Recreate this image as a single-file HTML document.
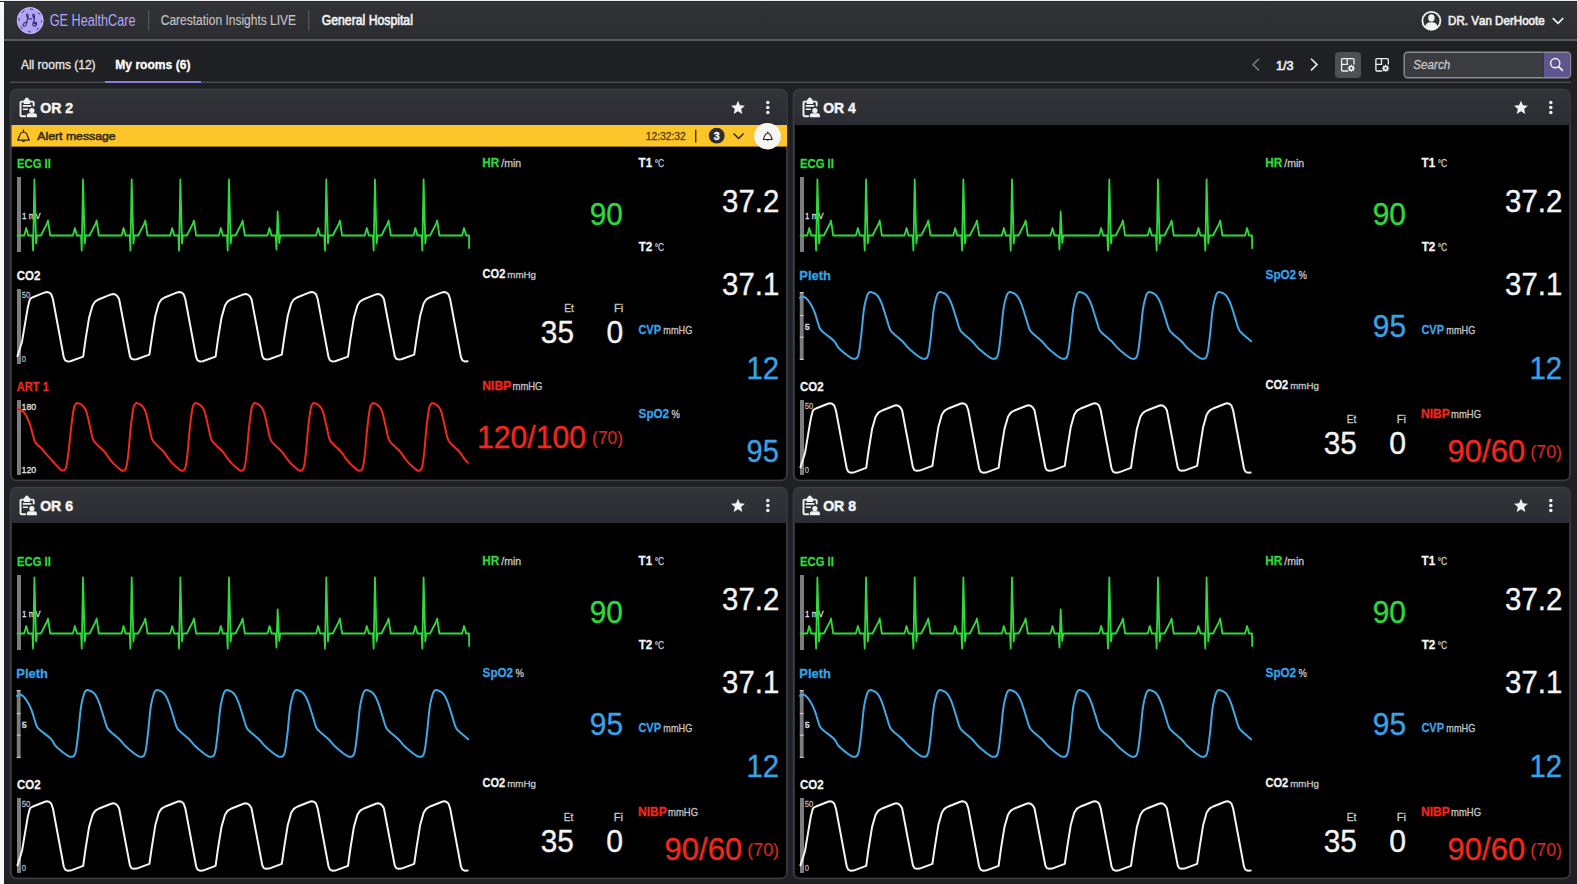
<!DOCTYPE html>
<html><head><meta charset="utf-8"><title>Carestation Insights LIVE</title>
<style>
html,body{margin:0;padding:0;background:#1f2023;overflow:hidden;}
svg{display:block;font-family:"Liberation Sans", sans-serif;font-kerning:none;}
text{font-family:"Liberation Sans", sans-serif;}
</style></head>
<body>
<svg width="1577" height="884" viewBox="0 0 1577 884">
<defs><linearGradient id="ph" x1="0" y1="0" x2="0" y2="1"><stop offset="0" stop-color="#333438"/><stop offset="0.55" stop-color="#2f3035"/><stop offset="1" stop-color="#2a2c33"/></linearGradient><linearGradient id="hh" x1="0" y1="0" x2="0" y2="1"><stop offset="0" stop-color="#333438"/><stop offset="1" stop-color="#2b2c30"/></linearGradient></defs>
<rect x="0" y="0" width="1577" height="884" fill="#1f2023"/>
<rect x="0" y="0" width="1577" height="40" fill="url(#hh)" />
<rect x="0" y="39" width="1577" height="2" fill="#5a5b5e" />
<rect x="0" y="0" width="4" height="884" fill="#f7f7f7" />
<rect x="0" y="1" width="1577" height="1" fill="#27282c" />
<rect x="0" y="0" width="1577" height="1" fill="#eeeef1" />
<circle cx="30.2" cy="20.5" r="13.3" fill="#b4a2f5"/>
<circle cx="30.2" cy="20.5" r="12.9" fill="none" stroke="#d6ccfb" stroke-width="0.7"/>
<circle cx="30.2" cy="20.5" r="11.4" fill="none" stroke="#2b2263" stroke-width="0.9" stroke-dasharray="3.2 5.8" stroke-dashoffset="1"/>
<path d="M23.2,24.6 Q23.0,26.6 24.6,26.3 Q26.4,25.6 26.9,22.4 L28.0,16.6 Q28.4,14.2 27.3,14.3 Q26.2,14.6 26.6,16.0 Q27.2,17.6 29.0,18.6 Q30.3,19.3 31.6,18.9 M26.9,22.4 Q25.4,22.0 24.2,23.2 Q23.3,24.0 23.2,24.6 M33.8,22.2 L34.4,16.6 Q34.6,14.2 33.5,14.3 Q32.4,14.6 32.8,16.0 Q33.3,17.4 34.6,18.2 M33.8,22.2 Q32.2,23.2 32.8,25.0 Q33.6,26.6 35.4,26.0 Q37.2,25.2 36.6,23.2 Q36.0,21.8 34.6,22.4 Q33.8,23.2 34.6,24.0 Q35.4,24.4 35.6,23.5" fill="none" stroke="#2b2263" stroke-width="1.05" stroke-linecap="round" stroke-linejoin="round"/>
<text x="49.76" y="26.10" font-size="15.80" fill="#b7a6f6" textLength="85.80" lengthAdjust="spacingAndGlyphs">GE HealthCare</text>
<rect x="148" y="10.5" width="1.3" height="20" fill="#56575b" />
<text x="160.77" y="25.30" font-size="14.00" fill="#c3c3c6" stroke="#c3c3c6" stroke-width="0.15" textLength="135.27" lengthAdjust="spacingAndGlyphs">Carestation Insights LIVE</text>
<rect x="308" y="10.5" width="1.3" height="20" fill="#56575b" />
<text x="321.68" y="25.30" font-size="14.00" fill="#f4f4f4" stroke="#f4f4f4" stroke-width="0.6" textLength="91.24" lengthAdjust="spacingAndGlyphs">General Hospital</text>
<circle cx="1431.4" cy="20.8" r="9.0" fill="none" stroke="#f0f0f0" stroke-width="1.8"/>
<ellipse cx="1431.4" cy="17.9" rx="3.2" ry="3.6" fill="#f2f2f2"/>
<path d="M1424.9,27.4 Q1425.4,22.2 1431.4,22.2 Q1437.4,22.2 1437.9,27.4 Q1434.8,29.8 1431.4,29.8 Q1428,29.8 1424.9,27.4 Z" fill="#f0f0f0"/>
<text x="1448.05" y="24.80" font-size="12.40" fill="#f2f2f2" stroke="#f2f2f2" stroke-width="0.6" textLength="96.67" lengthAdjust="spacingAndGlyphs">DR. Van DerHoote</text>
<path d="M1552.8,18.2 L1558,23.4 L1563.2,18.2" fill="none" stroke="#f0f0f0" stroke-width="1.7"/>
<text x="20.92" y="69.10" font-size="13.20" fill="#ececec" stroke="#ececec" stroke-width="0.28" textLength="74.69" lengthAdjust="spacingAndGlyphs">All rooms (12)</text>
<text x="115.24" y="69.10" font-size="13.20" fill="#ffffff" stroke="#ffffff" stroke-width="0.3" font-weight="bold" textLength="75.21" lengthAdjust="spacingAndGlyphs">My rooms (6)</text>
<rect x="10" y="81.6" width="1561" height="1.4" fill="#4b4c50" />
<rect x="105" y="81" width="96" height="2" fill="#8b7dd8" />
<path d="M1259,58.8 L1253,64.6 L1259,70.4" fill="none" stroke="#7a7a7c" stroke-width="1.5"/>
<text x="1276.03" y="69.60" font-size="13.00" fill="#f4f4f4" stroke="#f4f4f4" stroke-width="0.6" textLength="17.62" lengthAdjust="spacingAndGlyphs">1/3</text>
<path d="M1311,58.8 L1317,64.6 L1311,70.4" fill="none" stroke="#f0f0f0" stroke-width="1.5"/>
<rect x="1335" y="52" width="26" height="26" fill="#4f5053" rx="4" />
<g transform="translate(1341,58)" fill="none" stroke="#f0f0f0" stroke-width="1.3"><path d="M7,13 L1.5,13 Q0.6,13 0.6,12 L0.6,1.6 Q0.6,0.6 1.6,0.6 L12,0.6 Q13,0.6 13,1.6 L13,6.5"/><path d="M6.2,0.6 L6.2,6.3 L0.6,6.3"/></g>
<path d="M1355.30,68.30 L1353.70,69.29 L1354.13,71.13 L1352.29,70.70 L1351.30,72.30 L1350.31,70.70 L1348.47,71.13 L1348.90,69.29 L1347.30,68.30 L1348.90,67.31 L1348.47,65.47 L1350.31,65.90 L1351.30,64.30 L1352.29,65.90 L1354.13,65.47 L1353.70,67.31 Z" fill="#f0f0f0"/>
<circle cx="1351.3" cy="68.3" r="1.1" fill="#3a3a3a"/>
<g transform="translate(1375.3,58)" fill="none" stroke="#f0f0f0" stroke-width="1.3"><path d="M7,13 L1.5,13 Q0.6,13 0.6,12 L0.6,1.6 Q0.6,0.6 1.6,0.6 L12,0.6 Q13,0.6 13,1.6 L13,6.5"/><path d="M6.2,0.6 L6.2,6.3 L0.6,6.3"/></g>
<path d="M1389.60,68.30 L1388.00,69.29 L1388.43,71.13 L1386.59,70.70 L1385.60,72.30 L1384.61,70.70 L1382.77,71.13 L1383.20,69.29 L1381.60,68.30 L1383.20,67.31 L1382.77,65.47 L1384.61,65.90 L1385.60,64.30 L1386.59,65.90 L1388.43,65.47 L1388.00,67.31 Z" fill="#f0f0f0"/>
<circle cx="1385.6" cy="68.3" r="1.1" fill="#3a3a3a"/>
<rect x="1404.2" y="52.2" width="166.3" height="25.6" rx="3.5" fill="#3b3c40" stroke="#8e8e92" stroke-width="1.4"/>
<path d="M1543.5,52.9 L1567,52.9 Q1569.8,52.9 1569.8,55.7 L1569.8,74.3 Q1569.8,77.1 1567,77.1 L1543.5,77.1 Z" fill="#5f558f"/>
<line x1="1543.3" y1="52.5" x2="1543.3" y2="77.5" stroke="#2f3034" stroke-width="0.8"/>
<circle cx="1555.2" cy="63.2" r="4.6" fill="none" stroke="#f2f2f2" stroke-width="1.5"/>
<path d="M1558.6,66.6 L1562.4,70.4" stroke="#f2f2f2" stroke-width="1.7" stroke-linecap="round"/>
<text x="1413.31" y="68.70" font-size="12.60" fill="#c8c8ca" stroke="#c8c8ca" stroke-width="0.28" font-style="italic" textLength="36.88" lengthAdjust="spacingAndGlyphs">Search</text>
<rect x="10.5" y="89.5" width="776.5" height="391" rx="6" fill="#2e2f33" stroke="#3c3d41" stroke-width="1.5"/>
<path d="M11.0,125.5 L11.0,95.5 Q11.0,90.0 16.5,90.0 L781.0,90.0 Q786.5,90.0 786.5,95.5 L786.5,125.5 Z" fill="url(#ph)"/>
<path d="M12,125 L786,125 L786,474.5 Q786,479.5 781,479.5 L17,479.5 Q12,479.5 12,474.5 Z" fill="#000"/>
<g transform="translate(16,94)" fill="none" stroke="#f2f2f2" stroke-width="1.9" stroke-linecap="round"><path d="M9.2,22.3 L5.6,22.3 Q4.5,22.3 4.5,21.2 L4.5,8.7 Q4.5,7.6 5.6,7.6 L7.6,7.6"/><path d="M14.0,7.6 L16.6,7.6 Q17.7,7.6 17.7,8.7 L17.7,11.6"/></g>
<g transform="translate(16,94)" fill="#f2f2f2"><path d="M7.7,9.9 L7.7,6.4 Q7.7,5.4 8.7,5.4 L9.0,5.4 A1.85,1.85 0 0 1 12.7,5.4 L13.0,5.4 Q14.0,5.4 14.0,6.4 L14.0,9.9 Z"/><rect x="6.7" y="11.1" width="8.7" height="1.6" rx="0.5"/><rect x="6.7" y="14.4" width="5.3" height="1.6" rx="0.5"/><circle cx="15.9" cy="16.5" r="2.6"/><path d="M10.9,23.3 L10.9,21.2 Q10.9,19.2 13.0,19.2 L18.8,19.2 Q20.9,19.2 20.9,21.2 L20.9,23.3 Z"/></g>
<text x="40.17" y="112.50" font-size="15.30" fill="#f4f4f4" stroke="#f4f4f4" stroke-width="0.5" font-weight="bold" textLength="32.94" lengthAdjust="spacingAndGlyphs">OR 2</text>
<path d="M738.00,100.70 L739.93,105.34 L744.94,105.74 L741.12,109.02 L742.29,113.91 L738.00,111.28 L733.71,113.91 L734.88,109.02 L731.06,105.74 L736.07,105.34 Z" fill="#f2f2f2"/>
<circle cx="767.8" cy="102.5" r="1.75" fill="#f2f2f2"/>
<circle cx="767.8" cy="107.5" r="1.75" fill="#f2f2f2"/>
<circle cx="767.8" cy="112.5" r="1.75" fill="#f2f2f2"/>
<text x="17.00" y="168.40" font-size="13.60" fill="#2fd93c" stroke="#2fd93c" stroke-width="0.3" font-weight="bold" textLength="33.81" lengthAdjust="spacingAndGlyphs">ECG II</text>
<rect x="17" y="177" width="4" height="75" fill="#7d7d7d" />
<text x="22.04" y="218.70" font-size="9.20" fill="#e0e0e0" stroke="#e0e0e0" stroke-width="0.28" textLength="18.47" lengthAdjust="spacingAndGlyphs">1 mV</text>
<path d="M17.50,235.50 L24.20,235.50 L25.20,232.00 L26.20,228.00 L27.20,231.50 L28.20,235.50 L32.40,235.50 L33.10,250.50 L34.40,179.50 L36.10,243.50 L37.00,235.50 L40.90,235.50 L43.90,229.50 L46.60,224.50 L48.00,220.50 L50.20,235.50 L72.85,235.50 L73.85,232.00 L74.85,228.00 L75.85,231.50 L76.85,235.50 L81.05,235.50 L81.75,250.50 L83.05,179.50 L84.75,243.50 L85.65,235.50 L89.55,235.50 L92.55,229.50 L95.25,224.50 L96.65,220.50 L98.85,235.50 L121.50,235.50 L122.50,232.00 L123.50,228.00 L124.50,231.50 L125.50,235.50 L129.70,235.50 L130.40,250.50 L131.70,179.50 L133.40,243.50 L134.30,235.50 L138.20,235.50 L141.20,229.50 L143.90,224.50 L145.30,220.50 L147.50,235.50 L170.15,235.50 L171.15,232.00 L172.15,228.00 L173.15,231.50 L174.15,235.50 L178.35,235.50 L179.05,250.50 L180.35,179.50 L182.05,243.50 L182.95,235.50 L186.85,235.50 L189.85,229.50 L192.55,224.50 L193.95,220.50 L196.15,235.50 L218.80,235.50 L219.80,232.00 L220.80,228.00 L221.80,231.50 L222.80,235.50 L227.00,235.50 L227.70,250.50 L229.00,179.50 L230.70,243.50 L231.60,235.50 L235.50,235.50 L238.50,229.50 L241.20,224.50 L242.60,220.50 L244.80,235.50 L267.45,235.50 L268.45,232.00 L269.45,228.00 L270.45,231.50 L271.45,235.50 L275.65,235.50 L276.45,249.50 L277.65,211.50 L279.25,243.00 L280.25,235.50 L316.10,235.50 L317.10,232.00 L318.10,228.00 L319.10,231.50 L320.10,235.50 L324.30,235.50 L325.00,250.50 L326.30,179.50 L328.00,243.50 L328.90,235.50 L332.80,235.50 L335.80,229.50 L338.50,224.50 L339.90,220.50 L342.10,235.50 L364.75,235.50 L365.75,232.00 L366.75,228.00 L367.75,231.50 L368.75,235.50 L372.95,235.50 L373.65,250.50 L374.95,179.50 L376.65,243.50 L377.55,235.50 L381.45,235.50 L384.45,229.50 L387.15,224.50 L388.55,220.50 L390.75,235.50 L413.40,235.50 L414.40,232.00 L415.40,228.00 L416.40,231.50 L417.40,235.50 L421.60,235.50 L422.30,250.50 L423.60,179.50 L425.30,243.50 L426.20,235.50 L430.10,235.50 L433.10,229.50 L435.80,224.50 L437.20,220.50 L439.40,235.50 L462.05,235.50 L463.05,232.00 L464.05,228.00 L465.05,231.50 L466.05,235.50 L469.00,235.50 L469.20,248.00" fill="none" stroke="#2fd93c" stroke-width="1.8" stroke-linejoin="round" stroke-linecap="round"/>
<text x="16.78" y="279.80" font-size="13.20" fill="#f4f4f4" stroke="#f4f4f4" stroke-width="0.3" font-weight="bold" textLength="23.63" lengthAdjust="spacingAndGlyphs">CO2</text>
<rect x="17" y="289" width="4" height="75" fill="#7d7d7d" />
<text x="21.83" y="297.90" font-size="8.50" fill="#b8b8b8" stroke="#b8b8b8" stroke-width="0.28" textLength="8.51" lengthAdjust="spacingAndGlyphs">50</text>
<text x="21.84" y="361.60" font-size="8.50" fill="#b8b8b8" stroke="#b8b8b8" stroke-width="0.28" textLength="4.25" lengthAdjust="spacingAndGlyphs">0</text>
<path d="M17.50,356.10 L22.00,341.70 L25.00,323.80 L27.90,306.90 L29.60,300.20 L30.40,298.60 L32.90,297.20 L39.90,294.40 L44.90,292.40 L46.90,292.00 L49.10,292.40 L51.20,294.20 L52.90,299.00 L63.70,357.00 L65.20,360.40 L67.40,361.40 L70.40,361.30 L83.20,356.60 L85.60,339.20 L89.10,317.60 L92.60,305.50 L95.00,301.80 L96.60,300.60 L99.10,299.20 L106.10,296.40 L111.10,294.40 L113.10,294.00 L115.30,294.40 L117.40,296.20 L119.10,299.00 L129.90,356.00 L131.40,358.80 L133.60,359.40 L136.60,359.30 L149.40,354.60 L151.80,338.00 L155.30,316.00 L158.80,303.50 L161.20,299.80 L162.80,298.60 L165.30,297.20 L172.30,294.40 L177.30,292.40 L179.30,292.00 L181.50,292.40 L183.60,294.20 L185.30,299.00 L196.10,357.00 L197.60,360.40 L199.80,361.40 L202.80,361.30 L215.60,356.60 L218.00,339.20 L221.50,317.60 L225.00,305.50 L227.40,301.80 L229.00,300.60 L231.50,299.20 L238.50,296.40 L243.50,294.40 L245.50,294.00 L247.70,294.40 L249.80,296.20 L251.50,299.00 L262.30,356.00 L263.80,358.80 L266.00,359.40 L269.00,359.30 L281.80,354.60 L284.20,338.00 L287.70,316.00 L291.20,303.50 L293.60,299.80 L295.20,298.60 L297.70,297.20 L304.70,294.40 L309.70,292.40 L311.70,292.00 L313.90,292.40 L316.00,294.20 L317.70,299.00 L328.50,357.00 L330.00,360.40 L332.20,361.40 L335.20,361.30 L348.00,356.60 L350.40,339.20 L353.90,317.60 L357.40,305.50 L359.80,301.80 L361.40,300.60 L363.90,299.20 L370.90,296.40 L375.90,294.40 L377.90,294.00 L380.10,294.40 L382.20,296.20 L383.90,299.00 L394.70,356.00 L396.20,358.80 L398.40,359.40 L401.40,359.30 L414.20,354.60 L416.60,338.00 L420.10,316.00 L423.60,303.50 L426.00,299.80 L427.60,298.60 L430.10,297.20 L437.10,294.40 L442.10,292.40 L444.10,292.00 L446.30,292.40 L448.40,294.20 L450.10,299.00 L460.90,357.00 L462.40,360.40 L464.60,361.40 L467.60,361.30" fill="none" stroke="#f4f4f4" stroke-width="2.0" stroke-linejoin="round" stroke-linecap="round"/>
<text x="16.87" y="391.30" font-size="13.20" fill="#f0281d" stroke="#f0281d" stroke-width="0.3" font-weight="bold" textLength="31.98" lengthAdjust="spacingAndGlyphs">ART 1</text>
<rect x="17" y="400" width="4" height="75" fill="#7d7d7d" />
<text x="21.57" y="409.50" font-size="9.30" fill="#e6e6e6" stroke="#e6e6e6" stroke-width="0.28" textLength="14.63" lengthAdjust="spacingAndGlyphs">180</text>
<text x="21.57" y="473.00" font-size="9.30" fill="#e6e6e6" stroke="#e6e6e6" stroke-width="0.28" textLength="14.63" lengthAdjust="spacingAndGlyphs">120</text>
<path d="M17.50,409.00 L17.89,409.10 L18.43,409.22 L19.08,409.39 L19.78,409.64 L20.50,410.00 L21.24,410.41 L22.03,410.85 L22.86,411.42 L23.72,412.20 L24.60,413.30 L25.53,414.76 L26.51,416.50 L27.51,418.48 L28.49,420.64 L29.40,422.90 L30.26,425.44 L31.10,428.31 L31.89,431.24 L32.63,433.99 L33.30,436.30 L33.83,438.10 L34.23,439.55 L34.60,440.77 L35.06,441.88 L35.70,443.00 L36.57,444.07 L37.59,445.00 L38.71,445.90 L39.87,446.83 L41.00,447.90 L42.07,449.08 L43.11,450.31 L44.18,451.62 L45.36,453.05 L46.70,454.60 L48.31,456.40 L50.14,458.44 L52.04,460.53 L53.84,462.51 L55.40,464.20 L56.69,465.60 L57.82,466.84 L58.81,467.90 L59.70,468.78 L60.50,469.50 L61.18,470.04 L61.71,470.40 L62.16,470.59 L62.60,470.62 L63.10,470.50 L63.67,470.36 L64.26,470.19 L64.85,469.79 L65.44,468.96 L66.00,467.50 L66.53,465.30 L67.03,462.51 L67.53,459.27 L68.01,455.72 L68.50,452.00 L68.98,447.98 L69.46,443.57 L69.93,438.97 L70.41,434.38 L70.90,430.00 L71.42,425.64 L71.95,421.17 L72.49,416.88 L73.01,413.06 L73.50,410.00 L73.95,407.85 L74.36,406.43 L74.76,405.49 L75.17,404.83 L75.60,404.20 L76.03,403.64 L76.45,403.30 L76.89,403.14 L77.39,403.12 L78.00,403.20 L78.74,403.38 L79.60,403.67 L80.52,404.10 L81.44,404.67 L82.30,405.40 L83.11,406.19 L83.89,407.04 L84.67,408.08 L85.43,409.45 L86.20,411.30 L86.98,413.82 L87.77,416.92 L88.55,420.31 L89.30,423.67 L90.00,426.70 L90.62,429.47 L91.18,432.18 L91.72,434.74 L92.28,437.04 L92.90,439.00 L93.54,440.46 L94.17,441.48 L94.86,442.30 L95.68,443.13 L96.70,444.20 L98.00,445.52 L99.54,446.95 L101.20,448.46 L102.86,450.05 L104.40,451.70 L105.80,453.47 L107.14,455.38 L108.45,457.32 L109.79,459.23 L111.20,461.00 L112.75,462.70 L114.42,464.38 L116.08,465.96 L117.65,467.36 L119.00,468.50 L120.10,469.39 L121.03,470.09 L121.84,470.57 L122.58,470.81 L123.30,470.80 L124.00,470.61 L124.63,470.26 L125.22,469.62 L125.77,468.57 L126.30,467.00 L126.79,464.85 L127.24,462.20 L127.67,459.14 L128.08,455.71 L128.50,452.00 L128.92,447.81 L129.32,443.10 L129.73,438.16 L130.15,433.26 L130.60,428.70 L131.10,424.29 L131.63,419.86 L132.18,415.65 L132.71,411.94 L133.20,409.00 L133.64,406.99 L134.05,405.74 L134.43,404.99 L134.81,404.50 L135.20,404.00 L135.56,403.52 L135.87,403.23 L136.20,403.10 L136.61,403.10 L137.15,403.20 L137.87,403.39 L138.72,403.69 L139.65,404.11 L140.58,404.68 L141.45,405.40 L142.26,406.19 L143.04,407.04 L143.82,408.08 L144.58,409.45 L145.35,411.30 L146.13,413.82 L146.92,416.92 L147.70,420.31 L148.45,423.67 L149.15,426.70 L149.77,429.47 L150.33,432.18 L150.87,434.74 L151.43,437.04 L152.05,439.00 L152.69,440.46 L153.32,441.48 L154.01,442.30 L154.83,443.13 L155.85,444.20 L157.15,445.52 L158.69,446.95 L160.35,448.46 L162.01,450.05 L163.55,451.70 L164.95,453.47 L166.29,455.38 L167.60,457.32 L168.94,459.23 L170.35,461.00 L171.90,462.70 L173.57,464.38 L175.23,465.96 L176.80,467.36 L178.15,468.50 L179.25,469.39 L180.18,470.09 L180.99,470.57 L181.73,470.81 L182.45,470.80 L183.15,470.61 L183.78,470.26 L184.37,469.62 L184.92,468.57 L185.45,467.00 L185.94,464.85 L186.39,462.20 L186.82,459.14 L187.23,455.71 L187.65,452.00 L188.07,447.81 L188.47,443.10 L188.88,438.16 L189.30,433.26 L189.75,428.70 L190.25,424.29 L190.78,419.86 L191.33,415.65 L191.86,411.94 L192.35,409.00 L192.79,406.99 L193.20,405.74 L193.58,404.99 L193.96,404.50 L194.35,404.00 L194.71,403.52 L195.02,403.23 L195.35,403.10 L195.76,403.10 L196.30,403.20 L197.02,403.39 L197.87,403.69 L198.80,404.11 L199.73,404.68 L200.60,405.40 L201.41,406.19 L202.19,407.04 L202.97,408.08 L203.73,409.45 L204.50,411.30 L205.28,413.82 L206.07,416.92 L206.85,420.31 L207.60,423.67 L208.30,426.70 L208.92,429.47 L209.48,432.18 L210.02,434.74 L210.58,437.04 L211.20,439.00 L211.84,440.46 L212.47,441.48 L213.16,442.30 L213.98,443.13 L215.00,444.20 L216.30,445.52 L217.84,446.95 L219.50,448.46 L221.16,450.05 L222.70,451.70 L224.10,453.47 L225.44,455.38 L226.75,457.32 L228.09,459.23 L229.50,461.00 L231.05,462.70 L232.72,464.38 L234.38,465.96 L235.95,467.36 L237.30,468.50 L238.40,469.39 L239.33,470.09 L240.14,470.57 L240.88,470.81 L241.60,470.80 L242.30,470.61 L242.93,470.26 L243.52,469.62 L244.07,468.57 L244.60,467.00 L245.09,464.85 L245.54,462.20 L245.97,459.14 L246.38,455.71 L246.80,452.00 L247.22,447.81 L247.62,443.10 L248.03,438.16 L248.45,433.26 L248.90,428.70 L249.40,424.29 L249.93,419.86 L250.48,415.65 L251.01,411.94 L251.50,409.00 L251.94,406.99 L252.35,405.74 L252.73,404.99 L253.11,404.50 L253.50,404.00 L253.86,403.52 L254.17,403.23 L254.50,403.10 L254.91,403.10 L255.45,403.20 L256.17,403.39 L257.02,403.69 L257.95,404.11 L258.88,404.68 L259.75,405.40 L260.56,406.19 L261.34,407.04 L262.12,408.08 L262.88,409.45 L263.65,411.30 L264.43,413.82 L265.22,416.92 L266.00,420.31 L266.75,423.67 L267.45,426.70 L268.07,429.47 L268.63,432.18 L269.17,434.74 L269.73,437.04 L270.35,439.00 L270.99,440.46 L271.62,441.48 L272.31,442.30 L273.13,443.13 L274.15,444.20 L275.45,445.52 L276.99,446.95 L278.65,448.46 L280.31,450.05 L281.85,451.70 L283.25,453.47 L284.59,455.38 L285.90,457.32 L287.24,459.23 L288.65,461.00 L290.20,462.70 L291.87,464.38 L293.53,465.96 L295.10,467.36 L296.45,468.50 L297.55,469.39 L298.48,470.09 L299.29,470.57 L300.03,470.81 L300.75,470.80 L301.45,470.61 L302.08,470.26 L302.67,469.62 L303.22,468.57 L303.75,467.00 L304.24,464.85 L304.69,462.20 L305.12,459.14 L305.53,455.71 L305.95,452.00 L306.37,447.81 L306.77,443.10 L307.18,438.16 L307.60,433.26 L308.05,428.70 L308.55,424.29 L309.08,419.86 L309.63,415.65 L310.16,411.94 L310.65,409.00 L311.09,406.99 L311.50,405.74 L311.88,404.99 L312.26,404.50 L312.65,404.00 L313.01,403.52 L313.32,403.23 L313.65,403.10 L314.06,403.10 L314.60,403.20 L315.32,403.39 L316.17,403.69 L317.10,404.11 L318.03,404.68 L318.90,405.40 L319.71,406.19 L320.49,407.04 L321.27,408.08 L322.03,409.45 L322.80,411.30 L323.58,413.82 L324.37,416.92 L325.15,420.31 L325.90,423.67 L326.60,426.70 L327.22,429.47 L327.78,432.18 L328.32,434.74 L328.88,437.04 L329.50,439.00 L330.14,440.46 L330.77,441.48 L331.46,442.30 L332.28,443.13 L333.30,444.20 L334.60,445.52 L336.14,446.95 L337.80,448.46 L339.46,450.05 L341.00,451.70 L342.40,453.47 L343.74,455.38 L345.05,457.32 L346.39,459.23 L347.80,461.00 L349.35,462.70 L351.02,464.38 L352.68,465.96 L354.25,467.36 L355.60,468.50 L356.70,469.39 L357.63,470.09 L358.44,470.57 L359.18,470.81 L359.90,470.80 L360.60,470.61 L361.23,470.26 L361.82,469.62 L362.37,468.57 L362.90,467.00 L363.39,464.85 L363.84,462.20 L364.27,459.14 L364.68,455.71 L365.10,452.00 L365.52,447.81 L365.92,443.10 L366.33,438.16 L366.75,433.26 L367.20,428.70 L367.70,424.29 L368.23,419.86 L368.78,415.65 L369.31,411.94 L369.80,409.00 L370.24,406.99 L370.65,405.74 L371.03,404.99 L371.41,404.50 L371.80,404.00 L372.16,403.52 L372.47,403.23 L372.80,403.10 L373.21,403.10 L373.75,403.20 L374.47,403.39 L375.32,403.69 L376.25,404.11 L377.18,404.68 L378.05,405.40 L378.86,406.19 L379.64,407.04 L380.42,408.08 L381.18,409.45 L381.95,411.30 L382.73,413.82 L383.52,416.92 L384.30,420.31 L385.05,423.67 L385.75,426.70 L386.37,429.47 L386.93,432.18 L387.47,434.74 L388.03,437.04 L388.65,439.00 L389.29,440.46 L389.92,441.48 L390.61,442.30 L391.43,443.13 L392.45,444.20 L393.75,445.52 L395.29,446.95 L396.95,448.46 L398.61,450.05 L400.15,451.70 L401.55,453.47 L402.89,455.38 L404.20,457.32 L405.54,459.23 L406.95,461.00 L408.50,462.70 L410.17,464.38 L411.83,465.96 L413.40,467.36 L414.75,468.50 L415.85,469.39 L416.78,470.09 L417.59,470.57 L418.33,470.81 L419.05,470.80 L419.75,470.61 L420.38,470.26 L420.97,469.62 L421.52,468.57 L422.05,467.00 L422.54,464.85 L422.99,462.20 L423.42,459.14 L423.83,455.71 L424.25,452.00 L424.67,447.81 L425.07,443.10 L425.48,438.16 L425.90,433.26 L426.35,428.70 L426.85,424.29 L427.38,419.86 L427.93,415.65 L428.46,411.94 L428.95,409.00 L429.39,406.99 L429.80,405.74 L430.18,404.99 L430.56,404.50 L430.95,404.00 L431.31,403.52 L431.62,403.23 L431.95,403.10 L432.36,403.10 L432.90,403.20 L433.62,403.39 L434.47,403.69 L435.40,404.11 L436.33,404.68 L437.20,405.40 L438.01,406.19 L438.79,407.04 L439.57,408.08 L440.33,409.45 L441.10,411.30 L441.88,413.82 L442.67,416.92 L443.45,420.31 L444.20,423.67 L444.90,426.70 L445.52,429.47 L446.08,432.18 L446.62,434.74 L447.18,437.04 L447.80,439.00 L448.44,440.46 L449.07,441.48 L449.76,442.30 L450.58,443.13 L451.60,444.20 L452.90,445.52 L454.44,446.95 L456.10,448.46 L457.76,450.05 L459.30,451.70 L460.70,453.47 L462.04,455.38 L463.35,457.32 L464.69,459.23 L466.10,461.00 L467.65,462.70" fill="none" stroke="#f0281d" stroke-width="2.0" stroke-linejoin="round" stroke-linecap="round"/>
<text x="482.27" y="166.90" font-size="13.20" fill="#2fd93c" stroke="#2fd93c" stroke-width="0.3" font-weight="bold" textLength="16.92" lengthAdjust="spacingAndGlyphs">HR</text>
<text x="501.24" y="166.90" font-size="10.50" fill="#c8c8c8" stroke="#c8c8c8" stroke-width="0.28" textLength="19.90" lengthAdjust="spacingAndGlyphs">/min</text>
<text x="589.78" y="225.40" font-size="30.50" fill="#2fd93c" stroke="#2fd93c" stroke-width="0.35" textLength="33.22" lengthAdjust="spacingAndGlyphs">90</text>
<text x="638.62" y="166.90" font-size="13.20" fill="#f4f4f4" stroke="#f4f4f4" stroke-width="0.3" font-weight="bold" textLength="13.45" lengthAdjust="spacingAndGlyphs">T1</text>
<text x="654.63" y="166.90" font-size="10.50" fill="#c8c8c8" stroke="#c8c8c8" stroke-width="0.28" textLength="9.55" lengthAdjust="spacingAndGlyphs">°C</text>
<text x="722.05" y="211.80" font-size="30.50" fill="#f4f4f4" stroke="#f4f4f4" stroke-width="0.35" textLength="57.25" lengthAdjust="spacingAndGlyphs">37.2</text>
<text x="638.72" y="250.60" font-size="13.20" fill="#f4f4f4" stroke="#f4f4f4" stroke-width="0.3" font-weight="bold" textLength="13.60" lengthAdjust="spacingAndGlyphs">T2</text>
<text x="654.63" y="250.60" font-size="10.50" fill="#c8c8c8" stroke="#c8c8c8" stroke-width="0.28" textLength="9.55" lengthAdjust="spacingAndGlyphs">°C</text>
<text x="722.06" y="295.20" font-size="30.50" fill="#f4f4f4" stroke="#f4f4f4" stroke-width="0.35" textLength="57.20" lengthAdjust="spacingAndGlyphs">37.1</text>
<text x="638.40" y="334.00" font-size="13.20" fill="#3aa2e6" stroke="#3aa2e6" stroke-width="0.3" font-weight="bold" textLength="22.63" lengthAdjust="spacingAndGlyphs">CVP</text>
<text x="663.33" y="334.00" font-size="10.50" fill="#c8c8c8" stroke="#c8c8c8" stroke-width="0.28" textLength="28.91" lengthAdjust="spacingAndGlyphs">mmHG</text>
<text x="746.44" y="378.70" font-size="30.50" fill="#3aa2e6" stroke="#3aa2e6" stroke-width="0.35" textLength="32.66" lengthAdjust="spacingAndGlyphs">12</text>
<text x="482.60" y="277.90" font-size="13.20" fill="#f4f4f4" stroke="#f4f4f4" stroke-width="0.3" font-weight="bold" textLength="22.69" lengthAdjust="spacingAndGlyphs">CO2</text>
<text x="507.29" y="277.90" font-size="9.60" fill="#c8c8c8" stroke="#c8c8c8" stroke-width="0.28" textLength="28.70" lengthAdjust="spacingAndGlyphs">mmHg</text>
<text x="564.30" y="311.80" font-size="10.20" fill="#c8c8c8" stroke="#c8c8c8" stroke-width="0.28" textLength="9.63" lengthAdjust="spacingAndGlyphs">Et</text>
<text x="613.91" y="311.80" font-size="10.20" fill="#c8c8c8" stroke="#c8c8c8" stroke-width="0.28" textLength="9.41" lengthAdjust="spacingAndGlyphs">Fi</text>
<text x="540.84" y="342.60" font-size="30.50" fill="#f4f4f4" stroke="#f4f4f4" stroke-width="0.35" textLength="33.14" lengthAdjust="spacingAndGlyphs">35</text>
<text x="606.40" y="342.60" font-size="30.50" fill="#f4f4f4" stroke="#f4f4f4" stroke-width="0.35" textLength="16.70" lengthAdjust="spacingAndGlyphs">0</text>
<text x="482.34" y="389.90" font-size="13.20" fill="#f0281d" stroke="#f0281d" stroke-width="0.3" font-weight="bold" textLength="28.92" lengthAdjust="spacingAndGlyphs">NIBP</text>
<text x="512.51" y="389.90" font-size="10.50" fill="#c8c8c8" stroke="#c8c8c8" stroke-width="0.28" textLength="29.96" lengthAdjust="spacingAndGlyphs">mmHG</text>
<text x="638.61" y="417.90" font-size="13.20" fill="#3aa2e6" stroke="#3aa2e6" stroke-width="0.3" font-weight="bold" textLength="30.50" lengthAdjust="spacingAndGlyphs">SpO2</text>
<text x="671.60" y="417.90" font-size="10.50" fill="#c8c8c8" stroke="#c8c8c8" stroke-width="0.28" textLength="8.39" lengthAdjust="spacingAndGlyphs">%</text>
<text x="476.88" y="448.30" font-size="31.50" fill="#f0281d" stroke="#f0281d" stroke-width="0.35" textLength="109.13" lengthAdjust="spacingAndGlyphs">120/100</text>
<text x="592.07" y="444.20" font-size="18.50" fill="#dc281e" stroke="#dc281e" stroke-width="0.1" textLength="31.07" lengthAdjust="spacingAndGlyphs">(70)</text>
<text x="746.51" y="461.80" font-size="30.50" fill="#3aa2e6" stroke="#3aa2e6" stroke-width="0.35" textLength="32.33" lengthAdjust="spacingAndGlyphs">95</text>
<rect x="793.5" y="89.5" width="776.5" height="391" rx="6" fill="#2e2f33" stroke="#3c3d41" stroke-width="1.5"/>
<path d="M794.0,125.5 L794.0,95.5 Q794.0,90.0 799.5,90.0 L1564.0,90.0 Q1569.5,90.0 1569.5,95.5 L1569.5,125.5 Z" fill="url(#ph)"/>
<path d="M795,125 L1569,125 L1569,474.5 Q1569,479.5 1564,479.5 L800,479.5 Q795,479.5 795,474.5 Z" fill="#000"/>
<g transform="translate(799,94)" fill="none" stroke="#f2f2f2" stroke-width="1.9" stroke-linecap="round"><path d="M9.2,22.3 L5.6,22.3 Q4.5,22.3 4.5,21.2 L4.5,8.7 Q4.5,7.6 5.6,7.6 L7.6,7.6"/><path d="M14.0,7.6 L16.6,7.6 Q17.7,7.6 17.7,8.7 L17.7,11.6"/></g>
<g transform="translate(799,94)" fill="#f2f2f2"><path d="M7.7,9.9 L7.7,6.4 Q7.7,5.4 8.7,5.4 L9.0,5.4 A1.85,1.85 0 0 1 12.7,5.4 L13.0,5.4 Q14.0,5.4 14.0,6.4 L14.0,9.9 Z"/><rect x="6.7" y="11.1" width="8.7" height="1.6" rx="0.5"/><rect x="6.7" y="14.4" width="5.3" height="1.6" rx="0.5"/><circle cx="15.9" cy="16.5" r="2.6"/><path d="M10.9,23.3 L10.9,21.2 Q10.9,19.2 13.0,19.2 L18.8,19.2 Q20.9,19.2 20.9,21.2 L20.9,23.3 Z"/></g>
<text x="823.18" y="112.50" font-size="15.30" fill="#f4f4f4" stroke="#f4f4f4" stroke-width="0.5" font-weight="bold" textLength="32.44" lengthAdjust="spacingAndGlyphs">OR 4</text>
<path d="M1521.00,100.70 L1522.93,105.34 L1527.94,105.74 L1524.12,109.02 L1525.29,113.91 L1521.00,111.28 L1516.71,113.91 L1517.88,109.02 L1514.06,105.74 L1519.07,105.34 Z" fill="#f2f2f2"/>
<circle cx="1550.8" cy="102.5" r="1.75" fill="#f2f2f2"/>
<circle cx="1550.8" cy="107.5" r="1.75" fill="#f2f2f2"/>
<circle cx="1550.8" cy="112.5" r="1.75" fill="#f2f2f2"/>
<text x="800.00" y="168.40" font-size="13.60" fill="#2fd93c" stroke="#2fd93c" stroke-width="0.3" font-weight="bold" textLength="33.81" lengthAdjust="spacingAndGlyphs">ECG II</text>
<rect x="800" y="177" width="4" height="75" fill="#7d7d7d" />
<text x="805.04" y="218.70" font-size="9.20" fill="#e0e0e0" stroke="#e0e0e0" stroke-width="0.28" textLength="18.47" lengthAdjust="spacingAndGlyphs">1 mV</text>
<path d="M800.50,235.50 L807.20,235.50 L808.20,232.00 L809.20,228.00 L810.20,231.50 L811.20,235.50 L815.40,235.50 L816.10,250.50 L817.40,179.50 L819.10,243.50 L820.00,235.50 L823.90,235.50 L826.90,229.50 L829.60,224.50 L831.00,220.50 L833.20,235.50 L855.85,235.50 L856.85,232.00 L857.85,228.00 L858.85,231.50 L859.85,235.50 L864.05,235.50 L864.75,250.50 L866.05,179.50 L867.75,243.50 L868.65,235.50 L872.55,235.50 L875.55,229.50 L878.25,224.50 L879.65,220.50 L881.85,235.50 L904.50,235.50 L905.50,232.00 L906.50,228.00 L907.50,231.50 L908.50,235.50 L912.70,235.50 L913.40,250.50 L914.70,179.50 L916.40,243.50 L917.30,235.50 L921.20,235.50 L924.20,229.50 L926.90,224.50 L928.30,220.50 L930.50,235.50 L953.15,235.50 L954.15,232.00 L955.15,228.00 L956.15,231.50 L957.15,235.50 L961.35,235.50 L962.05,250.50 L963.35,179.50 L965.05,243.50 L965.95,235.50 L969.85,235.50 L972.85,229.50 L975.55,224.50 L976.95,220.50 L979.15,235.50 L1001.80,235.50 L1002.80,232.00 L1003.80,228.00 L1004.80,231.50 L1005.80,235.50 L1010.00,235.50 L1010.70,250.50 L1012.00,179.50 L1013.70,243.50 L1014.60,235.50 L1018.50,235.50 L1021.50,229.50 L1024.20,224.50 L1025.60,220.50 L1027.80,235.50 L1050.45,235.50 L1051.45,232.00 L1052.45,228.00 L1053.45,231.50 L1054.45,235.50 L1058.65,235.50 L1059.45,249.50 L1060.65,211.50 L1062.25,243.00 L1063.25,235.50 L1099.10,235.50 L1100.10,232.00 L1101.10,228.00 L1102.10,231.50 L1103.10,235.50 L1107.30,235.50 L1108.00,250.50 L1109.30,179.50 L1111.00,243.50 L1111.90,235.50 L1115.80,235.50 L1118.80,229.50 L1121.50,224.50 L1122.90,220.50 L1125.10,235.50 L1147.75,235.50 L1148.75,232.00 L1149.75,228.00 L1150.75,231.50 L1151.75,235.50 L1155.95,235.50 L1156.65,250.50 L1157.95,179.50 L1159.65,243.50 L1160.55,235.50 L1164.45,235.50 L1167.45,229.50 L1170.15,224.50 L1171.55,220.50 L1173.75,235.50 L1196.40,235.50 L1197.40,232.00 L1198.40,228.00 L1199.40,231.50 L1200.40,235.50 L1204.60,235.50 L1205.30,250.50 L1206.60,179.50 L1208.30,243.50 L1209.20,235.50 L1213.10,235.50 L1216.10,229.50 L1218.80,224.50 L1220.20,220.50 L1222.40,235.50 L1245.05,235.50 L1246.05,232.00 L1247.05,228.00 L1248.05,231.50 L1249.05,235.50 L1252.00,235.50 L1252.20,248.00" fill="none" stroke="#2fd93c" stroke-width="1.8" stroke-linejoin="round" stroke-linecap="round"/>
<text x="799.29" y="279.60" font-size="13.20" fill="#3aa2e6" stroke="#3aa2e6" stroke-width="0.3" font-weight="bold" textLength="31.56" lengthAdjust="spacingAndGlyphs">Pleth</text>
<rect x="799.8" y="292" width="3.8" height="68" fill="#7d7d7d" />
<rect x="799.8" y="292.0" width="3.8" height="1.2" fill="#c8c8c8" />
<rect x="799.8" y="314.9" width="3.8" height="1.2" fill="#c8c8c8" />
<rect x="799.8" y="336.59999999999997" width="3.8" height="1.2" fill="#c8c8c8" />
<rect x="799.8" y="358.79999999999995" width="3.8" height="1.2" fill="#c8c8c8" />
<text x="804.88" y="329.70" font-size="8.60" fill="#d0d0d0" stroke="#d0d0d0" stroke-width="0.3" font-weight="bold" textLength="4.92" lengthAdjust="spacingAndGlyphs">5</text>
<path d="M800.00,297.80 L800.45,297.59 L801.09,297.25 L801.83,296.91 L802.59,296.65 L803.30,296.60 L803.96,296.78 L804.62,297.11 L805.27,297.56 L805.90,298.07 L806.50,298.60 L807.05,299.14 L807.57,299.72 L808.07,300.35 L808.57,301.04 L809.10,301.80 L809.66,302.61 L810.24,303.48 L810.83,304.41 L811.42,305.41 L812.00,306.50 L812.58,307.65 L813.15,308.84 L813.73,310.13 L814.31,311.54 L814.90,313.10 L815.52,314.94 L816.18,317.03 L816.83,319.19 L817.45,321.24 L818.00,323.00 L818.44,324.42 L818.80,325.63 L819.13,326.68 L819.51,327.65 L820.00,328.60 L820.53,329.44 L821.05,330.11 L821.67,330.77 L822.52,331.56 L823.70,332.60 L825.41,333.98 L827.56,335.61 L829.88,337.37 L832.09,339.14 L833.90,340.80 L835.16,342.33 L836.05,343.82 L836.82,345.28 L837.71,346.77 L838.95,348.30 L840.71,349.99 L842.81,351.81 L845.04,353.61 L847.17,355.23 L848.95,356.50 L850.35,357.44 L851.51,358.14 L852.51,358.60 L853.43,358.82 L854.35,358.80 L855.26,358.67 L856.11,358.45 L856.90,357.91 L857.65,356.83 L858.35,355.00 L858.99,352.28 L859.56,348.83 L860.09,344.83 L860.62,340.49 L861.15,336.00 L861.69,331.05 L862.22,325.50 L862.75,319.84 L863.29,314.51 L863.85,310.00 L864.44,306.35 L865.07,303.24 L865.69,300.61 L866.30,298.39 L866.85,296.50 L867.34,295.05 L867.77,294.08 L868.18,293.44 L868.60,293.00 L869.05,292.60 L869.49,292.26 L869.91,292.07 L870.36,292.02 L870.90,292.10 L871.60,292.30 L872.51,292.59 L873.59,292.98 L874.76,293.51 L875.93,294.24 L877.00,295.20 L877.96,296.37 L878.88,297.72 L879.77,299.29 L880.67,301.14 L881.60,303.30 L882.60,305.98 L883.65,309.14 L884.70,312.49 L885.70,315.74 L886.60,318.60 L887.37,321.09 L888.04,323.41 L888.66,325.51 L889.27,327.39 L889.90,329.00 L890.47,330.19 L890.94,330.98 L891.46,331.61 L892.16,332.30 L893.20,333.30 L894.71,334.68 L896.59,336.28 L898.65,337.99 L900.65,339.70 L902.40,341.30 L903.79,342.74 L904.95,344.11 L906.05,345.46 L907.25,346.84 L908.70,348.30 L910.54,349.96 L912.65,351.78 L914.85,353.59 L916.94,355.22 L918.70,356.50 L920.10,357.44 L921.26,358.14 L922.26,358.60 L923.18,358.82 L924.10,358.80 L925.01,358.67 L925.86,358.45 L926.65,357.91 L927.40,356.83 L928.10,355.00 L928.74,352.28 L929.31,348.83 L929.84,344.83 L930.37,340.49 L930.90,336.00 L931.44,331.05 L931.97,325.50 L932.50,319.84 L933.04,314.51 L933.60,310.00 L934.19,306.35 L934.82,303.24 L935.44,300.61 L936.05,298.39 L936.60,296.50 L937.09,295.05 L937.52,294.08 L937.93,293.44 L938.35,293.00 L938.80,292.60 L939.24,292.26 L939.66,292.07 L940.11,292.02 L940.65,292.10 L941.35,292.30 L942.26,292.59 L943.34,292.98 L944.51,293.51 L945.68,294.24 L946.75,295.20 L947.71,296.37 L948.63,297.72 L949.52,299.29 L950.42,301.14 L951.35,303.30 L952.35,305.98 L953.40,309.14 L954.45,312.49 L955.45,315.74 L956.35,318.60 L957.12,321.09 L957.79,323.41 L958.41,325.51 L959.02,327.39 L959.65,329.00 L960.22,330.19 L960.69,330.98 L961.21,331.61 L961.91,332.30 L962.95,333.30 L964.46,334.68 L966.34,336.28 L968.40,337.99 L970.40,339.70 L972.15,341.30 L973.54,342.74 L974.70,344.11 L975.80,345.46 L977.00,346.84 L978.45,348.30 L980.29,349.96 L982.40,351.78 L984.60,353.59 L986.69,355.22 L988.45,356.50 L989.85,357.44 L991.01,358.14 L992.01,358.60 L992.93,358.82 L993.85,358.80 L994.76,358.67 L995.61,358.45 L996.40,357.91 L997.15,356.83 L997.85,355.00 L998.49,352.28 L999.06,348.83 L999.59,344.83 L1000.12,340.49 L1000.65,336.00 L1001.19,331.05 L1001.72,325.50 L1002.25,319.84 L1002.79,314.51 L1003.35,310.00 L1003.94,306.35 L1004.57,303.24 L1005.19,300.61 L1005.80,298.39 L1006.35,296.50 L1006.84,295.05 L1007.27,294.08 L1007.68,293.44 L1008.10,293.00 L1008.55,292.60 L1008.99,292.26 L1009.41,292.07 L1009.86,292.02 L1010.40,292.10 L1011.10,292.30 L1012.01,292.59 L1013.09,292.98 L1014.26,293.51 L1015.43,294.24 L1016.50,295.20 L1017.46,296.37 L1018.38,297.72 L1019.27,299.29 L1020.17,301.14 L1021.10,303.30 L1022.10,305.98 L1023.15,309.14 L1024.20,312.49 L1025.20,315.74 L1026.10,318.60 L1026.87,321.09 L1027.54,323.41 L1028.16,325.51 L1028.77,327.39 L1029.40,329.00 L1029.97,330.19 L1030.44,330.98 L1030.96,331.61 L1031.66,332.30 L1032.70,333.30 L1034.21,334.68 L1036.09,336.28 L1038.15,337.99 L1040.15,339.70 L1041.90,341.30 L1043.29,342.74 L1044.45,344.11 L1045.55,345.46 L1046.75,346.84 L1048.20,348.30 L1050.04,349.96 L1052.15,351.78 L1054.35,353.59 L1056.44,355.22 L1058.20,356.50 L1059.60,357.44 L1060.76,358.14 L1061.76,358.60 L1062.68,358.82 L1063.60,358.80 L1064.51,358.67 L1065.36,358.45 L1066.15,357.91 L1066.90,356.83 L1067.60,355.00 L1068.24,352.28 L1068.81,348.83 L1069.34,344.83 L1069.87,340.49 L1070.40,336.00 L1070.94,331.05 L1071.47,325.50 L1072.00,319.84 L1072.54,314.51 L1073.10,310.00 L1073.69,306.35 L1074.32,303.24 L1074.94,300.61 L1075.55,298.39 L1076.10,296.50 L1076.59,295.05 L1077.02,294.08 L1077.43,293.44 L1077.85,293.00 L1078.30,292.60 L1078.74,292.26 L1079.16,292.07 L1079.61,292.02 L1080.15,292.10 L1080.85,292.30 L1081.76,292.59 L1082.84,292.98 L1084.01,293.51 L1085.18,294.24 L1086.25,295.20 L1087.21,296.37 L1088.13,297.72 L1089.02,299.29 L1089.92,301.14 L1090.85,303.30 L1091.85,305.98 L1092.90,309.14 L1093.95,312.49 L1094.95,315.74 L1095.85,318.60 L1096.62,321.09 L1097.29,323.41 L1097.91,325.51 L1098.52,327.39 L1099.15,329.00 L1099.72,330.19 L1100.19,330.98 L1100.71,331.61 L1101.41,332.30 L1102.45,333.30 L1103.96,334.68 L1105.84,336.28 L1107.90,337.99 L1109.90,339.70 L1111.65,341.30 L1113.04,342.74 L1114.20,344.11 L1115.30,345.46 L1116.50,346.84 L1117.95,348.30 L1119.79,349.96 L1121.90,351.78 L1124.10,353.59 L1126.19,355.22 L1127.95,356.50 L1129.35,357.44 L1130.51,358.14 L1131.51,358.60 L1132.43,358.82 L1133.35,358.80 L1134.26,358.67 L1135.11,358.45 L1135.90,357.91 L1136.65,356.83 L1137.35,355.00 L1137.99,352.28 L1138.56,348.83 L1139.09,344.83 L1139.62,340.49 L1140.15,336.00 L1140.69,331.05 L1141.22,325.50 L1141.75,319.84 L1142.29,314.51 L1142.85,310.00 L1143.44,306.35 L1144.07,303.24 L1144.69,300.61 L1145.30,298.39 L1145.85,296.50 L1146.34,295.05 L1146.77,294.08 L1147.18,293.44 L1147.60,293.00 L1148.05,292.60 L1148.49,292.26 L1148.91,292.07 L1149.36,292.02 L1149.90,292.10 L1150.60,292.30 L1151.51,292.59 L1152.59,292.98 L1153.76,293.51 L1154.93,294.24 L1156.00,295.20 L1156.96,296.37 L1157.88,297.72 L1158.77,299.29 L1159.67,301.14 L1160.60,303.30 L1161.60,305.98 L1162.65,309.14 L1163.70,312.49 L1164.70,315.74 L1165.60,318.60 L1166.37,321.09 L1167.04,323.41 L1167.66,325.51 L1168.27,327.39 L1168.90,329.00 L1169.47,330.19 L1169.94,330.98 L1170.46,331.61 L1171.16,332.30 L1172.20,333.30 L1173.71,334.68 L1175.59,336.28 L1177.65,337.99 L1179.65,339.70 L1181.40,341.30 L1182.79,342.74 L1183.95,344.11 L1185.05,345.46 L1186.25,346.84 L1187.70,348.30 L1189.54,349.96 L1191.65,351.78 L1193.85,353.59 L1195.94,355.22 L1197.70,356.50 L1199.10,357.44 L1200.26,358.14 L1201.26,358.60 L1202.18,358.82 L1203.10,358.80 L1204.01,358.67 L1204.86,358.45 L1205.65,357.91 L1206.40,356.83 L1207.10,355.00 L1207.74,352.28 L1208.31,348.83 L1208.84,344.83 L1209.37,340.49 L1209.90,336.00 L1210.44,331.05 L1210.97,325.50 L1211.50,319.84 L1212.04,314.51 L1212.60,310.00 L1213.19,306.35 L1213.82,303.24 L1214.44,300.61 L1215.05,298.39 L1215.60,296.50 L1216.09,295.05 L1216.52,294.08 L1216.93,293.44 L1217.35,293.00 L1217.80,292.60 L1218.24,292.26 L1218.66,292.07 L1219.11,292.02 L1219.65,292.10 L1220.35,292.30 L1221.26,292.59 L1222.34,292.98 L1223.51,293.51 L1224.68,294.24 L1225.75,295.20 L1226.71,296.37 L1227.63,297.72 L1228.52,299.29 L1229.42,301.14 L1230.35,303.30 L1231.35,305.98 L1232.40,309.14 L1233.45,312.49 L1234.45,315.74 L1235.35,318.60 L1236.12,321.09 L1236.79,323.41 L1237.41,325.51 L1238.02,327.39 L1238.65,329.00 L1239.22,330.19 L1239.69,330.98 L1240.21,331.61 L1240.91,332.30 L1241.95,333.30 L1243.46,334.68 L1245.34,336.28 L1247.40,337.99 L1249.40,339.70 L1251.15,341.30" fill="none" stroke="#42a8e4" stroke-width="2.0" stroke-linejoin="round" stroke-linecap="round"/>
<text x="799.98" y="391.20" font-size="13.20" fill="#f4f4f4" stroke="#f4f4f4" stroke-width="0.3" font-weight="bold" textLength="23.63" lengthAdjust="spacingAndGlyphs">CO2</text>
<rect x="800" y="400" width="4" height="75" fill="#7d7d7d" />
<text x="804.83" y="409.00" font-size="8.50" fill="#b8b8b8" stroke="#b8b8b8" stroke-width="0.28" textLength="8.51" lengthAdjust="spacingAndGlyphs">50</text>
<text x="804.84" y="472.90" font-size="8.50" fill="#b8b8b8" stroke="#b8b8b8" stroke-width="0.28" textLength="4.25" lengthAdjust="spacingAndGlyphs">0</text>
<path d="M800.50,467.40 L805.00,453.00 L808.00,435.10 L810.90,418.20 L812.60,411.50 L813.40,409.90 L815.90,408.50 L822.90,405.70 L827.90,403.70 L829.90,403.30 L832.10,403.70 L834.20,405.50 L835.90,410.30 L846.70,468.30 L848.20,471.70 L850.40,472.70 L853.40,472.60 L866.20,467.90 L868.60,450.50 L872.10,428.90 L875.60,416.80 L878.00,413.10 L879.60,411.90 L882.10,410.50 L889.10,407.70 L894.10,405.70 L896.10,405.30 L898.30,405.70 L900.40,407.50 L902.10,410.30 L912.90,467.30 L914.40,470.10 L916.60,470.70 L919.60,470.60 L932.40,465.90 L934.80,449.30 L938.30,427.30 L941.80,414.80 L944.20,411.10 L945.80,409.90 L948.30,408.50 L955.30,405.70 L960.30,403.70 L962.30,403.30 L964.50,403.70 L966.60,405.50 L968.30,410.30 L979.10,468.30 L980.60,471.70 L982.80,472.70 L985.80,472.60 L998.60,467.90 L1001.00,450.50 L1004.50,428.90 L1008.00,416.80 L1010.40,413.10 L1012.00,411.90 L1014.50,410.50 L1021.50,407.70 L1026.50,405.70 L1028.50,405.30 L1030.70,405.70 L1032.80,407.50 L1034.50,410.30 L1045.30,467.30 L1046.80,470.10 L1049.00,470.70 L1052.00,470.60 L1064.80,465.90 L1067.20,449.30 L1070.70,427.30 L1074.20,414.80 L1076.60,411.10 L1078.20,409.90 L1080.70,408.50 L1087.70,405.70 L1092.70,403.70 L1094.70,403.30 L1096.90,403.70 L1099.00,405.50 L1100.70,410.30 L1111.50,468.30 L1113.00,471.70 L1115.20,472.70 L1118.20,472.60 L1131.00,467.90 L1133.40,450.50 L1136.90,428.90 L1140.40,416.80 L1142.80,413.10 L1144.40,411.90 L1146.90,410.50 L1153.90,407.70 L1158.90,405.70 L1160.90,405.30 L1163.10,405.70 L1165.20,407.50 L1166.90,410.30 L1177.70,467.30 L1179.20,470.10 L1181.40,470.70 L1184.40,470.60 L1197.20,465.90 L1199.60,449.30 L1203.10,427.30 L1206.60,414.80 L1209.00,411.10 L1210.60,409.90 L1213.10,408.50 L1220.10,405.70 L1225.10,403.70 L1227.10,403.30 L1229.30,403.70 L1231.40,405.50 L1233.10,410.30 L1243.90,468.30 L1245.40,471.70 L1247.60,472.70 L1250.60,472.60" fill="none" stroke="#f4f4f4" stroke-width="2.0" stroke-linejoin="round" stroke-linecap="round"/>
<text x="1265.27" y="166.90" font-size="13.20" fill="#2fd93c" stroke="#2fd93c" stroke-width="0.3" font-weight="bold" textLength="16.92" lengthAdjust="spacingAndGlyphs">HR</text>
<text x="1284.24" y="166.90" font-size="10.50" fill="#c8c8c8" stroke="#c8c8c8" stroke-width="0.28" textLength="19.90" lengthAdjust="spacingAndGlyphs">/min</text>
<text x="1372.78" y="225.40" font-size="30.50" fill="#2fd93c" stroke="#2fd93c" stroke-width="0.35" textLength="33.22" lengthAdjust="spacingAndGlyphs">90</text>
<text x="1421.62" y="166.90" font-size="13.20" fill="#f4f4f4" stroke="#f4f4f4" stroke-width="0.3" font-weight="bold" textLength="13.45" lengthAdjust="spacingAndGlyphs">T1</text>
<text x="1437.63" y="166.90" font-size="10.50" fill="#c8c8c8" stroke="#c8c8c8" stroke-width="0.28" textLength="9.55" lengthAdjust="spacingAndGlyphs">°C</text>
<text x="1505.05" y="211.80" font-size="30.50" fill="#f4f4f4" stroke="#f4f4f4" stroke-width="0.35" textLength="57.25" lengthAdjust="spacingAndGlyphs">37.2</text>
<text x="1421.72" y="250.60" font-size="13.20" fill="#f4f4f4" stroke="#f4f4f4" stroke-width="0.3" font-weight="bold" textLength="13.60" lengthAdjust="spacingAndGlyphs">T2</text>
<text x="1437.63" y="250.60" font-size="10.50" fill="#c8c8c8" stroke="#c8c8c8" stroke-width="0.28" textLength="9.55" lengthAdjust="spacingAndGlyphs">°C</text>
<text x="1505.06" y="295.20" font-size="30.50" fill="#f4f4f4" stroke="#f4f4f4" stroke-width="0.35" textLength="57.20" lengthAdjust="spacingAndGlyphs">37.1</text>
<text x="1421.40" y="334.00" font-size="13.20" fill="#3aa2e6" stroke="#3aa2e6" stroke-width="0.3" font-weight="bold" textLength="22.63" lengthAdjust="spacingAndGlyphs">CVP</text>
<text x="1446.33" y="334.00" font-size="10.50" fill="#c8c8c8" stroke="#c8c8c8" stroke-width="0.28" textLength="28.91" lengthAdjust="spacingAndGlyphs">mmHG</text>
<text x="1529.44" y="378.70" font-size="30.50" fill="#3aa2e6" stroke="#3aa2e6" stroke-width="0.35" textLength="32.66" lengthAdjust="spacingAndGlyphs">12</text>
<text x="1265.61" y="278.90" font-size="13.20" fill="#3aa2e6" stroke="#3aa2e6" stroke-width="0.3" font-weight="bold" textLength="30.50" lengthAdjust="spacingAndGlyphs">SpO2</text>
<text x="1298.60" y="278.90" font-size="10.50" fill="#c8c8c8" stroke="#c8c8c8" stroke-width="0.28" textLength="8.39" lengthAdjust="spacingAndGlyphs">%</text>
<text x="1372.77" y="336.60" font-size="30.50" fill="#3aa2e6" stroke="#3aa2e6" stroke-width="0.35" textLength="33.31" lengthAdjust="spacingAndGlyphs">95</text>
<text x="1265.50" y="389.30" font-size="13.20" fill="#f4f4f4" stroke="#f4f4f4" stroke-width="0.3" font-weight="bold" textLength="22.69" lengthAdjust="spacingAndGlyphs">CO2</text>
<text x="1290.19" y="389.30" font-size="9.60" fill="#c8c8c8" stroke="#c8c8c8" stroke-width="0.28" textLength="28.70" lengthAdjust="spacingAndGlyphs">mmHg</text>
<text x="1346.80" y="423.40" font-size="10.20" fill="#c8c8c8" stroke="#c8c8c8" stroke-width="0.28" textLength="9.63" lengthAdjust="spacingAndGlyphs">Et</text>
<text x="1396.71" y="423.40" font-size="10.20" fill="#c8c8c8" stroke="#c8c8c8" stroke-width="0.28" textLength="9.41" lengthAdjust="spacingAndGlyphs">Fi</text>
<text x="1323.74" y="453.70" font-size="30.50" fill="#f4f4f4" stroke="#f4f4f4" stroke-width="0.35" textLength="33.03" lengthAdjust="spacingAndGlyphs">35</text>
<text x="1389.29" y="453.70" font-size="30.50" fill="#f4f4f4" stroke="#f4f4f4" stroke-width="0.35" textLength="16.81" lengthAdjust="spacingAndGlyphs">0</text>
<text x="1420.94" y="417.70" font-size="13.20" fill="#f0281d" stroke="#f0281d" stroke-width="0.3" font-weight="bold" textLength="28.92" lengthAdjust="spacingAndGlyphs">NIBP</text>
<text x="1451.11" y="417.70" font-size="10.50" fill="#c8c8c8" stroke="#c8c8c8" stroke-width="0.28" textLength="29.96" lengthAdjust="spacingAndGlyphs">mmHG</text>
<text x="1447.62" y="461.80" font-size="30.50" fill="#f0281d" stroke="#f0281d" stroke-width="0.35" textLength="77.62" lengthAdjust="spacingAndGlyphs">90/60</text>
<text x="1530.24" y="457.90" font-size="17.50" fill="#dc281e" stroke="#dc281e" stroke-width="0.1" textLength="31.82" lengthAdjust="spacingAndGlyphs">(70)</text>
<rect x="10.5" y="487.5" width="776.5" height="391" rx="6" fill="#2e2f33" stroke="#3c3d41" stroke-width="1.5"/>
<path d="M11.0,523.5 L11.0,493.5 Q11.0,488.0 16.5,488.0 L781.0,488.0 Q786.5,488.0 786.5,493.5 L786.5,523.5 Z" fill="url(#ph)"/>
<path d="M12,523 L786,523 L786,872.5 Q786,877.5 781,877.5 L17,877.5 Q12,877.5 12,872.5 Z" fill="#000"/>
<g transform="translate(16,492)" fill="none" stroke="#f2f2f2" stroke-width="1.9" stroke-linecap="round"><path d="M9.2,22.3 L5.6,22.3 Q4.5,22.3 4.5,21.2 L4.5,8.7 Q4.5,7.6 5.6,7.6 L7.6,7.6"/><path d="M14.0,7.6 L16.6,7.6 Q17.7,7.6 17.7,8.7 L17.7,11.6"/></g>
<g transform="translate(16,492)" fill="#f2f2f2"><path d="M7.7,9.9 L7.7,6.4 Q7.7,5.4 8.7,5.4 L9.0,5.4 A1.85,1.85 0 0 1 12.7,5.4 L13.0,5.4 Q14.0,5.4 14.0,6.4 L14.0,9.9 Z"/><rect x="6.7" y="11.1" width="8.7" height="1.6" rx="0.5"/><rect x="6.7" y="14.4" width="5.3" height="1.6" rx="0.5"/><circle cx="15.9" cy="16.5" r="2.6"/><path d="M10.9,23.3 L10.9,21.2 Q10.9,19.2 13.0,19.2 L18.8,19.2 Q20.9,19.2 20.9,21.2 L20.9,23.3 Z"/></g>
<text x="40.17" y="510.50" font-size="15.30" fill="#f4f4f4" stroke="#f4f4f4" stroke-width="0.5" font-weight="bold" textLength="32.89" lengthAdjust="spacingAndGlyphs">OR 6</text>
<path d="M738.00,498.70 L739.93,503.34 L744.94,503.74 L741.12,507.02 L742.29,511.91 L738.00,509.29 L733.71,511.91 L734.88,507.02 L731.06,503.74 L736.07,503.34 Z" fill="#f2f2f2"/>
<circle cx="767.8" cy="500.5" r="1.75" fill="#f2f2f2"/>
<circle cx="767.8" cy="505.5" r="1.75" fill="#f2f2f2"/>
<circle cx="767.8" cy="510.5" r="1.75" fill="#f2f2f2"/>
<text x="17.00" y="566.40" font-size="13.60" fill="#2fd93c" stroke="#2fd93c" stroke-width="0.3" font-weight="bold" textLength="33.81" lengthAdjust="spacingAndGlyphs">ECG II</text>
<rect x="17" y="575" width="4" height="75" fill="#7d7d7d" />
<text x="22.04" y="616.70" font-size="9.20" fill="#e0e0e0" stroke="#e0e0e0" stroke-width="0.28" textLength="18.47" lengthAdjust="spacingAndGlyphs">1 mV</text>
<path d="M17.50,633.50 L24.20,633.50 L25.20,630.00 L26.20,626.00 L27.20,629.50 L28.20,633.50 L32.40,633.50 L33.10,648.50 L34.40,577.50 L36.10,641.50 L37.00,633.50 L40.90,633.50 L43.90,627.50 L46.60,622.50 L48.00,618.50 L50.20,633.50 L72.85,633.50 L73.85,630.00 L74.85,626.00 L75.85,629.50 L76.85,633.50 L81.05,633.50 L81.75,648.50 L83.05,577.50 L84.75,641.50 L85.65,633.50 L89.55,633.50 L92.55,627.50 L95.25,622.50 L96.65,618.50 L98.85,633.50 L121.50,633.50 L122.50,630.00 L123.50,626.00 L124.50,629.50 L125.50,633.50 L129.70,633.50 L130.40,648.50 L131.70,577.50 L133.40,641.50 L134.30,633.50 L138.20,633.50 L141.20,627.50 L143.90,622.50 L145.30,618.50 L147.50,633.50 L170.15,633.50 L171.15,630.00 L172.15,626.00 L173.15,629.50 L174.15,633.50 L178.35,633.50 L179.05,648.50 L180.35,577.50 L182.05,641.50 L182.95,633.50 L186.85,633.50 L189.85,627.50 L192.55,622.50 L193.95,618.50 L196.15,633.50 L218.80,633.50 L219.80,630.00 L220.80,626.00 L221.80,629.50 L222.80,633.50 L227.00,633.50 L227.70,648.50 L229.00,577.50 L230.70,641.50 L231.60,633.50 L235.50,633.50 L238.50,627.50 L241.20,622.50 L242.60,618.50 L244.80,633.50 L267.45,633.50 L268.45,630.00 L269.45,626.00 L270.45,629.50 L271.45,633.50 L275.65,633.50 L276.45,647.50 L277.65,609.50 L279.25,641.00 L280.25,633.50 L316.10,633.50 L317.10,630.00 L318.10,626.00 L319.10,629.50 L320.10,633.50 L324.30,633.50 L325.00,648.50 L326.30,577.50 L328.00,641.50 L328.90,633.50 L332.80,633.50 L335.80,627.50 L338.50,622.50 L339.90,618.50 L342.10,633.50 L364.75,633.50 L365.75,630.00 L366.75,626.00 L367.75,629.50 L368.75,633.50 L372.95,633.50 L373.65,648.50 L374.95,577.50 L376.65,641.50 L377.55,633.50 L381.45,633.50 L384.45,627.50 L387.15,622.50 L388.55,618.50 L390.75,633.50 L413.40,633.50 L414.40,630.00 L415.40,626.00 L416.40,629.50 L417.40,633.50 L421.60,633.50 L422.30,648.50 L423.60,577.50 L425.30,641.50 L426.20,633.50 L430.10,633.50 L433.10,627.50 L435.80,622.50 L437.20,618.50 L439.40,633.50 L462.05,633.50 L463.05,630.00 L464.05,626.00 L465.05,629.50 L466.05,633.50 L469.00,633.50 L469.20,646.00" fill="none" stroke="#2fd93c" stroke-width="1.8" stroke-linejoin="round" stroke-linecap="round"/>
<text x="16.29" y="677.60" font-size="13.20" fill="#3aa2e6" stroke="#3aa2e6" stroke-width="0.3" font-weight="bold" textLength="31.56" lengthAdjust="spacingAndGlyphs">Pleth</text>
<rect x="16.8" y="690" width="3.8" height="68" fill="#7d7d7d" />
<rect x="16.8" y="690.0" width="3.8" height="1.2" fill="#c8c8c8" />
<rect x="16.8" y="712.9" width="3.8" height="1.2" fill="#c8c8c8" />
<rect x="16.8" y="734.5999999999999" width="3.8" height="1.2" fill="#c8c8c8" />
<rect x="16.8" y="756.8" width="3.8" height="1.2" fill="#c8c8c8" />
<text x="21.88" y="727.70" font-size="8.60" fill="#d0d0d0" stroke="#d0d0d0" stroke-width="0.3" font-weight="bold" textLength="4.92" lengthAdjust="spacingAndGlyphs">5</text>
<path d="M17.00,695.80 L17.45,695.59 L18.09,695.25 L18.83,694.91 L19.59,694.65 L20.30,694.60 L20.96,694.78 L21.62,695.11 L22.27,695.56 L22.90,696.07 L23.50,696.60 L24.05,697.14 L24.57,697.72 L25.07,698.35 L25.57,699.04 L26.10,699.80 L26.66,700.61 L27.24,701.48 L27.83,702.41 L28.42,703.41 L29.00,704.50 L29.58,705.65 L30.15,706.84 L30.73,708.13 L31.31,709.54 L31.90,711.10 L32.52,712.94 L33.18,715.03 L33.83,717.19 L34.45,719.24 L35.00,721.00 L35.44,722.42 L35.80,723.63 L36.13,724.68 L36.51,725.65 L37.00,726.60 L37.53,727.44 L38.05,728.11 L38.67,728.77 L39.52,729.56 L40.70,730.60 L42.41,731.98 L44.56,733.61 L46.88,735.37 L49.09,737.14 L50.90,738.80 L52.16,740.33 L53.05,741.82 L53.82,743.28 L54.71,744.77 L55.95,746.30 L57.71,747.99 L59.81,749.81 L62.04,751.61 L64.17,753.23 L65.95,754.50 L67.35,755.44 L68.51,756.14 L69.51,756.60 L70.43,756.82 L71.35,756.80 L72.26,756.67 L73.11,756.45 L73.90,755.91 L74.65,754.83 L75.35,753.00 L75.99,750.28 L76.56,746.83 L77.09,742.83 L77.62,738.49 L78.15,734.00 L78.69,729.05 L79.22,723.50 L79.75,717.84 L80.29,712.51 L80.85,708.00 L81.44,704.35 L82.07,701.24 L82.69,698.61 L83.30,696.39 L83.85,694.50 L84.34,693.05 L84.77,692.08 L85.18,691.44 L85.60,691.00 L86.05,690.60 L86.49,690.26 L86.91,690.07 L87.36,690.02 L87.90,690.10 L88.60,690.30 L89.51,690.59 L90.59,690.98 L91.76,691.51 L92.93,692.24 L94.00,693.20 L94.96,694.37 L95.88,695.72 L96.77,697.29 L97.67,699.14 L98.60,701.30 L99.60,703.98 L100.65,707.14 L101.70,710.49 L102.70,713.74 L103.60,716.60 L104.37,719.09 L105.04,721.41 L105.66,723.51 L106.27,725.39 L106.90,727.00 L107.47,728.19 L107.94,728.98 L108.46,729.61 L109.16,730.30 L110.20,731.30 L111.71,732.68 L113.59,734.28 L115.65,735.99 L117.65,737.70 L119.40,739.30 L120.79,740.74 L121.95,742.11 L123.05,743.46 L124.25,744.84 L125.70,746.30 L127.54,747.96 L129.65,749.78 L131.85,751.59 L133.94,753.22 L135.70,754.50 L137.10,755.44 L138.26,756.14 L139.26,756.60 L140.18,756.82 L141.10,756.80 L142.01,756.67 L142.86,756.45 L143.65,755.91 L144.40,754.83 L145.10,753.00 L145.74,750.28 L146.31,746.83 L146.84,742.83 L147.37,738.49 L147.90,734.00 L148.44,729.05 L148.97,723.50 L149.50,717.84 L150.04,712.51 L150.60,708.00 L151.19,704.35 L151.82,701.24 L152.44,698.61 L153.05,696.39 L153.60,694.50 L154.09,693.05 L154.52,692.08 L154.93,691.44 L155.35,691.00 L155.80,690.60 L156.24,690.26 L156.66,690.07 L157.11,690.02 L157.65,690.10 L158.35,690.30 L159.26,690.59 L160.34,690.98 L161.51,691.51 L162.68,692.24 L163.75,693.20 L164.71,694.37 L165.63,695.72 L166.52,697.29 L167.42,699.14 L168.35,701.30 L169.35,703.98 L170.40,707.14 L171.45,710.49 L172.45,713.74 L173.35,716.60 L174.12,719.09 L174.79,721.41 L175.41,723.51 L176.02,725.39 L176.65,727.00 L177.22,728.19 L177.69,728.98 L178.21,729.61 L178.91,730.30 L179.95,731.30 L181.46,732.68 L183.34,734.28 L185.40,735.99 L187.40,737.70 L189.15,739.30 L190.54,740.74 L191.70,742.11 L192.80,743.46 L194.00,744.84 L195.45,746.30 L197.29,747.96 L199.40,749.78 L201.60,751.59 L203.69,753.22 L205.45,754.50 L206.85,755.44 L208.01,756.14 L209.01,756.60 L209.93,756.82 L210.85,756.80 L211.76,756.67 L212.61,756.45 L213.40,755.91 L214.15,754.83 L214.85,753.00 L215.49,750.28 L216.06,746.83 L216.59,742.83 L217.12,738.49 L217.65,734.00 L218.19,729.05 L218.72,723.50 L219.25,717.84 L219.79,712.51 L220.35,708.00 L220.94,704.35 L221.57,701.24 L222.19,698.61 L222.80,696.39 L223.35,694.50 L223.84,693.05 L224.27,692.08 L224.68,691.44 L225.10,691.00 L225.55,690.60 L225.99,690.26 L226.41,690.07 L226.86,690.02 L227.40,690.10 L228.10,690.30 L229.01,690.59 L230.09,690.98 L231.26,691.51 L232.43,692.24 L233.50,693.20 L234.46,694.37 L235.38,695.72 L236.27,697.29 L237.17,699.14 L238.10,701.30 L239.10,703.98 L240.15,707.14 L241.20,710.49 L242.20,713.74 L243.10,716.60 L243.87,719.09 L244.54,721.41 L245.16,723.51 L245.77,725.39 L246.40,727.00 L246.97,728.19 L247.44,728.98 L247.96,729.61 L248.66,730.30 L249.70,731.30 L251.21,732.68 L253.09,734.28 L255.15,735.99 L257.15,737.70 L258.90,739.30 L260.29,740.74 L261.45,742.11 L262.55,743.46 L263.75,744.84 L265.20,746.30 L267.04,747.96 L269.15,749.78 L271.35,751.59 L273.44,753.22 L275.20,754.50 L276.60,755.44 L277.76,756.14 L278.76,756.60 L279.68,756.82 L280.60,756.80 L281.51,756.67 L282.36,756.45 L283.15,755.91 L283.90,754.83 L284.60,753.00 L285.24,750.28 L285.81,746.83 L286.34,742.83 L286.87,738.49 L287.40,734.00 L287.94,729.05 L288.47,723.50 L289.00,717.84 L289.54,712.51 L290.10,708.00 L290.69,704.35 L291.32,701.24 L291.94,698.61 L292.55,696.39 L293.10,694.50 L293.59,693.05 L294.02,692.08 L294.43,691.44 L294.85,691.00 L295.30,690.60 L295.74,690.26 L296.16,690.07 L296.61,690.02 L297.15,690.10 L297.85,690.30 L298.76,690.59 L299.84,690.98 L301.01,691.51 L302.18,692.24 L303.25,693.20 L304.21,694.37 L305.13,695.72 L306.02,697.29 L306.92,699.14 L307.85,701.30 L308.85,703.98 L309.90,707.14 L310.95,710.49 L311.95,713.74 L312.85,716.60 L313.62,719.09 L314.29,721.41 L314.91,723.51 L315.52,725.39 L316.15,727.00 L316.72,728.19 L317.19,728.98 L317.71,729.61 L318.41,730.30 L319.45,731.30 L320.96,732.68 L322.84,734.28 L324.90,735.99 L326.90,737.70 L328.65,739.30 L330.04,740.74 L331.20,742.11 L332.30,743.46 L333.50,744.84 L334.95,746.30 L336.79,747.96 L338.90,749.78 L341.10,751.59 L343.19,753.22 L344.95,754.50 L346.35,755.44 L347.51,756.14 L348.51,756.60 L349.43,756.82 L350.35,756.80 L351.26,756.67 L352.11,756.45 L352.90,755.91 L353.65,754.83 L354.35,753.00 L354.99,750.28 L355.56,746.83 L356.09,742.83 L356.62,738.49 L357.15,734.00 L357.69,729.05 L358.22,723.50 L358.75,717.84 L359.29,712.51 L359.85,708.00 L360.44,704.35 L361.07,701.24 L361.69,698.61 L362.30,696.39 L362.85,694.50 L363.34,693.05 L363.77,692.08 L364.18,691.44 L364.60,691.00 L365.05,690.60 L365.49,690.26 L365.91,690.07 L366.36,690.02 L366.90,690.10 L367.60,690.30 L368.51,690.59 L369.59,690.98 L370.76,691.51 L371.93,692.24 L373.00,693.20 L373.96,694.37 L374.88,695.72 L375.77,697.29 L376.67,699.14 L377.60,701.30 L378.60,703.98 L379.65,707.14 L380.70,710.49 L381.70,713.74 L382.60,716.60 L383.37,719.09 L384.04,721.41 L384.66,723.51 L385.27,725.39 L385.90,727.00 L386.47,728.19 L386.94,728.98 L387.46,729.61 L388.16,730.30 L389.20,731.30 L390.71,732.68 L392.59,734.28 L394.65,735.99 L396.65,737.70 L398.40,739.30 L399.79,740.74 L400.95,742.11 L402.05,743.46 L403.25,744.84 L404.70,746.30 L406.54,747.96 L408.65,749.78 L410.85,751.59 L412.94,753.22 L414.70,754.50 L416.10,755.44 L417.26,756.14 L418.26,756.60 L419.18,756.82 L420.10,756.80 L421.01,756.67 L421.86,756.45 L422.65,755.91 L423.40,754.83 L424.10,753.00 L424.74,750.28 L425.31,746.83 L425.84,742.83 L426.37,738.49 L426.90,734.00 L427.44,729.05 L427.97,723.50 L428.50,717.84 L429.04,712.51 L429.60,708.00 L430.19,704.35 L430.82,701.24 L431.44,698.61 L432.05,696.39 L432.60,694.50 L433.09,693.05 L433.52,692.08 L433.93,691.44 L434.35,691.00 L434.80,690.60 L435.24,690.26 L435.66,690.07 L436.11,690.02 L436.65,690.10 L437.35,690.30 L438.26,690.59 L439.34,690.98 L440.51,691.51 L441.68,692.24 L442.75,693.20 L443.71,694.37 L444.63,695.72 L445.52,697.29 L446.42,699.14 L447.35,701.30 L448.35,703.98 L449.40,707.14 L450.45,710.49 L451.45,713.74 L452.35,716.60 L453.12,719.09 L453.79,721.41 L454.41,723.51 L455.02,725.39 L455.65,727.00 L456.22,728.19 L456.69,728.98 L457.21,729.61 L457.91,730.30 L458.95,731.30 L460.46,732.68 L462.34,734.28 L464.40,735.99 L466.40,737.70 L468.15,739.30" fill="none" stroke="#42a8e4" stroke-width="2.0" stroke-linejoin="round" stroke-linecap="round"/>
<text x="16.98" y="789.20" font-size="13.20" fill="#f4f4f4" stroke="#f4f4f4" stroke-width="0.3" font-weight="bold" textLength="23.63" lengthAdjust="spacingAndGlyphs">CO2</text>
<rect x="17" y="798" width="4" height="75" fill="#7d7d7d" />
<text x="21.83" y="807.00" font-size="8.50" fill="#b8b8b8" stroke="#b8b8b8" stroke-width="0.28" textLength="8.51" lengthAdjust="spacingAndGlyphs">50</text>
<text x="21.84" y="870.90" font-size="8.50" fill="#b8b8b8" stroke="#b8b8b8" stroke-width="0.28" textLength="4.25" lengthAdjust="spacingAndGlyphs">0</text>
<path d="M17.50,865.40 L22.00,851.00 L25.00,833.10 L27.90,816.20 L29.60,809.50 L30.40,807.90 L32.90,806.50 L39.90,803.70 L44.90,801.70 L46.90,801.30 L49.10,801.70 L51.20,803.50 L52.90,808.30 L63.70,866.30 L65.20,869.70 L67.40,870.70 L70.40,870.60 L83.20,865.90 L85.60,848.50 L89.10,826.90 L92.60,814.80 L95.00,811.10 L96.60,809.90 L99.10,808.50 L106.10,805.70 L111.10,803.70 L113.10,803.30 L115.30,803.70 L117.40,805.50 L119.10,808.30 L129.90,865.30 L131.40,868.10 L133.60,868.70 L136.60,868.60 L149.40,863.90 L151.80,847.30 L155.30,825.30 L158.80,812.80 L161.20,809.10 L162.80,807.90 L165.30,806.50 L172.30,803.70 L177.30,801.70 L179.30,801.30 L181.50,801.70 L183.60,803.50 L185.30,808.30 L196.10,866.30 L197.60,869.70 L199.80,870.70 L202.80,870.60 L215.60,865.90 L218.00,848.50 L221.50,826.90 L225.00,814.80 L227.40,811.10 L229.00,809.90 L231.50,808.50 L238.50,805.70 L243.50,803.70 L245.50,803.30 L247.70,803.70 L249.80,805.50 L251.50,808.30 L262.30,865.30 L263.80,868.10 L266.00,868.70 L269.00,868.60 L281.80,863.90 L284.20,847.30 L287.70,825.30 L291.20,812.80 L293.60,809.10 L295.20,807.90 L297.70,806.50 L304.70,803.70 L309.70,801.70 L311.70,801.30 L313.90,801.70 L316.00,803.50 L317.70,808.30 L328.50,866.30 L330.00,869.70 L332.20,870.70 L335.20,870.60 L348.00,865.90 L350.40,848.50 L353.90,826.90 L357.40,814.80 L359.80,811.10 L361.40,809.90 L363.90,808.50 L370.90,805.70 L375.90,803.70 L377.90,803.30 L380.10,803.70 L382.20,805.50 L383.90,808.30 L394.70,865.30 L396.20,868.10 L398.40,868.70 L401.40,868.60 L414.20,863.90 L416.60,847.30 L420.10,825.30 L423.60,812.80 L426.00,809.10 L427.60,807.90 L430.10,806.50 L437.10,803.70 L442.10,801.70 L444.10,801.30 L446.30,801.70 L448.40,803.50 L450.10,808.30 L460.90,866.30 L462.40,869.70 L464.60,870.70 L467.60,870.60" fill="none" stroke="#f4f4f4" stroke-width="2.0" stroke-linejoin="round" stroke-linecap="round"/>
<text x="482.27" y="564.90" font-size="13.20" fill="#2fd93c" stroke="#2fd93c" stroke-width="0.3" font-weight="bold" textLength="16.92" lengthAdjust="spacingAndGlyphs">HR</text>
<text x="501.24" y="564.90" font-size="10.50" fill="#c8c8c8" stroke="#c8c8c8" stroke-width="0.28" textLength="19.90" lengthAdjust="spacingAndGlyphs">/min</text>
<text x="589.78" y="623.40" font-size="30.50" fill="#2fd93c" stroke="#2fd93c" stroke-width="0.35" textLength="33.22" lengthAdjust="spacingAndGlyphs">90</text>
<text x="638.62" y="564.90" font-size="13.20" fill="#f4f4f4" stroke="#f4f4f4" stroke-width="0.3" font-weight="bold" textLength="13.45" lengthAdjust="spacingAndGlyphs">T1</text>
<text x="654.63" y="564.90" font-size="10.50" fill="#c8c8c8" stroke="#c8c8c8" stroke-width="0.28" textLength="9.55" lengthAdjust="spacingAndGlyphs">°C</text>
<text x="722.05" y="609.80" font-size="30.50" fill="#f4f4f4" stroke="#f4f4f4" stroke-width="0.35" textLength="57.25" lengthAdjust="spacingAndGlyphs">37.2</text>
<text x="638.72" y="648.60" font-size="13.20" fill="#f4f4f4" stroke="#f4f4f4" stroke-width="0.3" font-weight="bold" textLength="13.60" lengthAdjust="spacingAndGlyphs">T2</text>
<text x="654.63" y="648.60" font-size="10.50" fill="#c8c8c8" stroke="#c8c8c8" stroke-width="0.28" textLength="9.55" lengthAdjust="spacingAndGlyphs">°C</text>
<text x="722.06" y="693.20" font-size="30.50" fill="#f4f4f4" stroke="#f4f4f4" stroke-width="0.35" textLength="57.20" lengthAdjust="spacingAndGlyphs">37.1</text>
<text x="638.40" y="732.00" font-size="13.20" fill="#3aa2e6" stroke="#3aa2e6" stroke-width="0.3" font-weight="bold" textLength="22.63" lengthAdjust="spacingAndGlyphs">CVP</text>
<text x="663.33" y="732.00" font-size="10.50" fill="#c8c8c8" stroke="#c8c8c8" stroke-width="0.28" textLength="28.91" lengthAdjust="spacingAndGlyphs">mmHG</text>
<text x="746.44" y="776.70" font-size="30.50" fill="#3aa2e6" stroke="#3aa2e6" stroke-width="0.35" textLength="32.66" lengthAdjust="spacingAndGlyphs">12</text>
<text x="482.61" y="676.90" font-size="13.20" fill="#3aa2e6" stroke="#3aa2e6" stroke-width="0.3" font-weight="bold" textLength="30.50" lengthAdjust="spacingAndGlyphs">SpO2</text>
<text x="515.60" y="676.90" font-size="10.50" fill="#c8c8c8" stroke="#c8c8c8" stroke-width="0.28" textLength="8.39" lengthAdjust="spacingAndGlyphs">%</text>
<text x="589.77" y="734.60" font-size="30.50" fill="#3aa2e6" stroke="#3aa2e6" stroke-width="0.35" textLength="33.31" lengthAdjust="spacingAndGlyphs">95</text>
<text x="482.50" y="787.30" font-size="13.20" fill="#f4f4f4" stroke="#f4f4f4" stroke-width="0.3" font-weight="bold" textLength="22.69" lengthAdjust="spacingAndGlyphs">CO2</text>
<text x="507.19" y="787.30" font-size="9.60" fill="#c8c8c8" stroke="#c8c8c8" stroke-width="0.28" textLength="28.70" lengthAdjust="spacingAndGlyphs">mmHg</text>
<text x="563.80" y="821.40" font-size="10.20" fill="#c8c8c8" stroke="#c8c8c8" stroke-width="0.28" textLength="9.63" lengthAdjust="spacingAndGlyphs">Et</text>
<text x="613.71" y="821.40" font-size="10.20" fill="#c8c8c8" stroke="#c8c8c8" stroke-width="0.28" textLength="9.41" lengthAdjust="spacingAndGlyphs">Fi</text>
<text x="540.74" y="851.70" font-size="30.50" fill="#f4f4f4" stroke="#f4f4f4" stroke-width="0.35" textLength="33.03" lengthAdjust="spacingAndGlyphs">35</text>
<text x="606.29" y="851.70" font-size="30.50" fill="#f4f4f4" stroke="#f4f4f4" stroke-width="0.35" textLength="16.81" lengthAdjust="spacingAndGlyphs">0</text>
<text x="637.94" y="815.70" font-size="13.20" fill="#f0281d" stroke="#f0281d" stroke-width="0.3" font-weight="bold" textLength="28.92" lengthAdjust="spacingAndGlyphs">NIBP</text>
<text x="668.11" y="815.70" font-size="10.50" fill="#c8c8c8" stroke="#c8c8c8" stroke-width="0.28" textLength="29.96" lengthAdjust="spacingAndGlyphs">mmHG</text>
<text x="664.62" y="859.80" font-size="30.50" fill="#f0281d" stroke="#f0281d" stroke-width="0.35" textLength="77.62" lengthAdjust="spacingAndGlyphs">90/60</text>
<text x="747.24" y="855.90" font-size="17.50" fill="#dc281e" stroke="#dc281e" stroke-width="0.1" textLength="31.82" lengthAdjust="spacingAndGlyphs">(70)</text>
<rect x="793.5" y="487.5" width="776.5" height="391" rx="6" fill="#2e2f33" stroke="#3c3d41" stroke-width="1.5"/>
<path d="M794.0,523.5 L794.0,493.5 Q794.0,488.0 799.5,488.0 L1564.0,488.0 Q1569.5,488.0 1569.5,493.5 L1569.5,523.5 Z" fill="url(#ph)"/>
<path d="M795,523 L1569,523 L1569,872.5 Q1569,877.5 1564,877.5 L800,877.5 Q795,877.5 795,872.5 Z" fill="#000"/>
<g transform="translate(799,492)" fill="none" stroke="#f2f2f2" stroke-width="1.9" stroke-linecap="round"><path d="M9.2,22.3 L5.6,22.3 Q4.5,22.3 4.5,21.2 L4.5,8.7 Q4.5,7.6 5.6,7.6 L7.6,7.6"/><path d="M14.0,7.6 L16.6,7.6 Q17.7,7.6 17.7,8.7 L17.7,11.6"/></g>
<g transform="translate(799,492)" fill="#f2f2f2"><path d="M7.7,9.9 L7.7,6.4 Q7.7,5.4 8.7,5.4 L9.0,5.4 A1.85,1.85 0 0 1 12.7,5.4 L13.0,5.4 Q14.0,5.4 14.0,6.4 L14.0,9.9 Z"/><rect x="6.7" y="11.1" width="8.7" height="1.6" rx="0.5"/><rect x="6.7" y="14.4" width="5.3" height="1.6" rx="0.5"/><circle cx="15.9" cy="16.5" r="2.6"/><path d="M10.9,23.3 L10.9,21.2 Q10.9,19.2 13.0,19.2 L18.8,19.2 Q20.9,19.2 20.9,21.2 L20.9,23.3 Z"/></g>
<text x="823.17" y="510.50" font-size="15.30" fill="#f4f4f4" stroke="#f4f4f4" stroke-width="0.5" font-weight="bold" textLength="32.81" lengthAdjust="spacingAndGlyphs">OR 8</text>
<path d="M1521.00,498.70 L1522.93,503.34 L1527.94,503.74 L1524.12,507.02 L1525.29,511.91 L1521.00,509.29 L1516.71,511.91 L1517.88,507.02 L1514.06,503.74 L1519.07,503.34 Z" fill="#f2f2f2"/>
<circle cx="1550.8" cy="500.5" r="1.75" fill="#f2f2f2"/>
<circle cx="1550.8" cy="505.5" r="1.75" fill="#f2f2f2"/>
<circle cx="1550.8" cy="510.5" r="1.75" fill="#f2f2f2"/>
<text x="800.00" y="566.40" font-size="13.60" fill="#2fd93c" stroke="#2fd93c" stroke-width="0.3" font-weight="bold" textLength="33.81" lengthAdjust="spacingAndGlyphs">ECG II</text>
<rect x="800" y="575" width="4" height="75" fill="#7d7d7d" />
<text x="805.04" y="616.70" font-size="9.20" fill="#e0e0e0" stroke="#e0e0e0" stroke-width="0.28" textLength="18.47" lengthAdjust="spacingAndGlyphs">1 mV</text>
<path d="M800.50,633.50 L807.20,633.50 L808.20,630.00 L809.20,626.00 L810.20,629.50 L811.20,633.50 L815.40,633.50 L816.10,648.50 L817.40,577.50 L819.10,641.50 L820.00,633.50 L823.90,633.50 L826.90,627.50 L829.60,622.50 L831.00,618.50 L833.20,633.50 L855.85,633.50 L856.85,630.00 L857.85,626.00 L858.85,629.50 L859.85,633.50 L864.05,633.50 L864.75,648.50 L866.05,577.50 L867.75,641.50 L868.65,633.50 L872.55,633.50 L875.55,627.50 L878.25,622.50 L879.65,618.50 L881.85,633.50 L904.50,633.50 L905.50,630.00 L906.50,626.00 L907.50,629.50 L908.50,633.50 L912.70,633.50 L913.40,648.50 L914.70,577.50 L916.40,641.50 L917.30,633.50 L921.20,633.50 L924.20,627.50 L926.90,622.50 L928.30,618.50 L930.50,633.50 L953.15,633.50 L954.15,630.00 L955.15,626.00 L956.15,629.50 L957.15,633.50 L961.35,633.50 L962.05,648.50 L963.35,577.50 L965.05,641.50 L965.95,633.50 L969.85,633.50 L972.85,627.50 L975.55,622.50 L976.95,618.50 L979.15,633.50 L1001.80,633.50 L1002.80,630.00 L1003.80,626.00 L1004.80,629.50 L1005.80,633.50 L1010.00,633.50 L1010.70,648.50 L1012.00,577.50 L1013.70,641.50 L1014.60,633.50 L1018.50,633.50 L1021.50,627.50 L1024.20,622.50 L1025.60,618.50 L1027.80,633.50 L1050.45,633.50 L1051.45,630.00 L1052.45,626.00 L1053.45,629.50 L1054.45,633.50 L1058.65,633.50 L1059.45,647.50 L1060.65,609.50 L1062.25,641.00 L1063.25,633.50 L1099.10,633.50 L1100.10,630.00 L1101.10,626.00 L1102.10,629.50 L1103.10,633.50 L1107.30,633.50 L1108.00,648.50 L1109.30,577.50 L1111.00,641.50 L1111.90,633.50 L1115.80,633.50 L1118.80,627.50 L1121.50,622.50 L1122.90,618.50 L1125.10,633.50 L1147.75,633.50 L1148.75,630.00 L1149.75,626.00 L1150.75,629.50 L1151.75,633.50 L1155.95,633.50 L1156.65,648.50 L1157.95,577.50 L1159.65,641.50 L1160.55,633.50 L1164.45,633.50 L1167.45,627.50 L1170.15,622.50 L1171.55,618.50 L1173.75,633.50 L1196.40,633.50 L1197.40,630.00 L1198.40,626.00 L1199.40,629.50 L1200.40,633.50 L1204.60,633.50 L1205.30,648.50 L1206.60,577.50 L1208.30,641.50 L1209.20,633.50 L1213.10,633.50 L1216.10,627.50 L1218.80,622.50 L1220.20,618.50 L1222.40,633.50 L1245.05,633.50 L1246.05,630.00 L1247.05,626.00 L1248.05,629.50 L1249.05,633.50 L1252.00,633.50 L1252.20,646.00" fill="none" stroke="#2fd93c" stroke-width="1.8" stroke-linejoin="round" stroke-linecap="round"/>
<text x="799.29" y="677.60" font-size="13.20" fill="#3aa2e6" stroke="#3aa2e6" stroke-width="0.3" font-weight="bold" textLength="31.56" lengthAdjust="spacingAndGlyphs">Pleth</text>
<rect x="799.8" y="690" width="3.8" height="68" fill="#7d7d7d" />
<rect x="799.8" y="690.0" width="3.8" height="1.2" fill="#c8c8c8" />
<rect x="799.8" y="712.9" width="3.8" height="1.2" fill="#c8c8c8" />
<rect x="799.8" y="734.5999999999999" width="3.8" height="1.2" fill="#c8c8c8" />
<rect x="799.8" y="756.8" width="3.8" height="1.2" fill="#c8c8c8" />
<text x="804.88" y="727.70" font-size="8.60" fill="#d0d0d0" stroke="#d0d0d0" stroke-width="0.3" font-weight="bold" textLength="4.92" lengthAdjust="spacingAndGlyphs">5</text>
<path d="M800.00,695.80 L800.45,695.59 L801.09,695.25 L801.83,694.91 L802.59,694.65 L803.30,694.60 L803.96,694.78 L804.62,695.11 L805.27,695.56 L805.90,696.07 L806.50,696.60 L807.05,697.14 L807.57,697.72 L808.07,698.35 L808.57,699.04 L809.10,699.80 L809.66,700.61 L810.24,701.48 L810.83,702.41 L811.42,703.41 L812.00,704.50 L812.58,705.65 L813.15,706.84 L813.73,708.13 L814.31,709.54 L814.90,711.10 L815.52,712.94 L816.18,715.03 L816.83,717.19 L817.45,719.24 L818.00,721.00 L818.44,722.42 L818.80,723.63 L819.13,724.68 L819.51,725.65 L820.00,726.60 L820.53,727.44 L821.05,728.11 L821.67,728.77 L822.52,729.56 L823.70,730.60 L825.41,731.98 L827.56,733.61 L829.88,735.37 L832.09,737.14 L833.90,738.80 L835.16,740.33 L836.05,741.82 L836.82,743.28 L837.71,744.77 L838.95,746.30 L840.71,747.99 L842.81,749.81 L845.04,751.61 L847.17,753.23 L848.95,754.50 L850.35,755.44 L851.51,756.14 L852.51,756.60 L853.43,756.82 L854.35,756.80 L855.26,756.67 L856.11,756.45 L856.90,755.91 L857.65,754.83 L858.35,753.00 L858.99,750.28 L859.56,746.83 L860.09,742.83 L860.62,738.49 L861.15,734.00 L861.69,729.05 L862.22,723.50 L862.75,717.84 L863.29,712.51 L863.85,708.00 L864.44,704.35 L865.07,701.24 L865.69,698.61 L866.30,696.39 L866.85,694.50 L867.34,693.05 L867.77,692.08 L868.18,691.44 L868.60,691.00 L869.05,690.60 L869.49,690.26 L869.91,690.07 L870.36,690.02 L870.90,690.10 L871.60,690.30 L872.51,690.59 L873.59,690.98 L874.76,691.51 L875.93,692.24 L877.00,693.20 L877.96,694.37 L878.88,695.72 L879.77,697.29 L880.67,699.14 L881.60,701.30 L882.60,703.98 L883.65,707.14 L884.70,710.49 L885.70,713.74 L886.60,716.60 L887.37,719.09 L888.04,721.41 L888.66,723.51 L889.27,725.39 L889.90,727.00 L890.47,728.19 L890.94,728.98 L891.46,729.61 L892.16,730.30 L893.20,731.30 L894.71,732.68 L896.59,734.28 L898.65,735.99 L900.65,737.70 L902.40,739.30 L903.79,740.74 L904.95,742.11 L906.05,743.46 L907.25,744.84 L908.70,746.30 L910.54,747.96 L912.65,749.78 L914.85,751.59 L916.94,753.22 L918.70,754.50 L920.10,755.44 L921.26,756.14 L922.26,756.60 L923.18,756.82 L924.10,756.80 L925.01,756.67 L925.86,756.45 L926.65,755.91 L927.40,754.83 L928.10,753.00 L928.74,750.28 L929.31,746.83 L929.84,742.83 L930.37,738.49 L930.90,734.00 L931.44,729.05 L931.97,723.50 L932.50,717.84 L933.04,712.51 L933.60,708.00 L934.19,704.35 L934.82,701.24 L935.44,698.61 L936.05,696.39 L936.60,694.50 L937.09,693.05 L937.52,692.08 L937.93,691.44 L938.35,691.00 L938.80,690.60 L939.24,690.26 L939.66,690.07 L940.11,690.02 L940.65,690.10 L941.35,690.30 L942.26,690.59 L943.34,690.98 L944.51,691.51 L945.68,692.24 L946.75,693.20 L947.71,694.37 L948.63,695.72 L949.52,697.29 L950.42,699.14 L951.35,701.30 L952.35,703.98 L953.40,707.14 L954.45,710.49 L955.45,713.74 L956.35,716.60 L957.12,719.09 L957.79,721.41 L958.41,723.51 L959.02,725.39 L959.65,727.00 L960.22,728.19 L960.69,728.98 L961.21,729.61 L961.91,730.30 L962.95,731.30 L964.46,732.68 L966.34,734.28 L968.40,735.99 L970.40,737.70 L972.15,739.30 L973.54,740.74 L974.70,742.11 L975.80,743.46 L977.00,744.84 L978.45,746.30 L980.29,747.96 L982.40,749.78 L984.60,751.59 L986.69,753.22 L988.45,754.50 L989.85,755.44 L991.01,756.14 L992.01,756.60 L992.93,756.82 L993.85,756.80 L994.76,756.67 L995.61,756.45 L996.40,755.91 L997.15,754.83 L997.85,753.00 L998.49,750.28 L999.06,746.83 L999.59,742.83 L1000.12,738.49 L1000.65,734.00 L1001.19,729.05 L1001.72,723.50 L1002.25,717.84 L1002.79,712.51 L1003.35,708.00 L1003.94,704.35 L1004.57,701.24 L1005.19,698.61 L1005.80,696.39 L1006.35,694.50 L1006.84,693.05 L1007.27,692.08 L1007.68,691.44 L1008.10,691.00 L1008.55,690.60 L1008.99,690.26 L1009.41,690.07 L1009.86,690.02 L1010.40,690.10 L1011.10,690.30 L1012.01,690.59 L1013.09,690.98 L1014.26,691.51 L1015.43,692.24 L1016.50,693.20 L1017.46,694.37 L1018.38,695.72 L1019.27,697.29 L1020.17,699.14 L1021.10,701.30 L1022.10,703.98 L1023.15,707.14 L1024.20,710.49 L1025.20,713.74 L1026.10,716.60 L1026.87,719.09 L1027.54,721.41 L1028.16,723.51 L1028.77,725.39 L1029.40,727.00 L1029.97,728.19 L1030.44,728.98 L1030.96,729.61 L1031.66,730.30 L1032.70,731.30 L1034.21,732.68 L1036.09,734.28 L1038.15,735.99 L1040.15,737.70 L1041.90,739.30 L1043.29,740.74 L1044.45,742.11 L1045.55,743.46 L1046.75,744.84 L1048.20,746.30 L1050.04,747.96 L1052.15,749.78 L1054.35,751.59 L1056.44,753.22 L1058.20,754.50 L1059.60,755.44 L1060.76,756.14 L1061.76,756.60 L1062.68,756.82 L1063.60,756.80 L1064.51,756.67 L1065.36,756.45 L1066.15,755.91 L1066.90,754.83 L1067.60,753.00 L1068.24,750.28 L1068.81,746.83 L1069.34,742.83 L1069.87,738.49 L1070.40,734.00 L1070.94,729.05 L1071.47,723.50 L1072.00,717.84 L1072.54,712.51 L1073.10,708.00 L1073.69,704.35 L1074.32,701.24 L1074.94,698.61 L1075.55,696.39 L1076.10,694.50 L1076.59,693.05 L1077.02,692.08 L1077.43,691.44 L1077.85,691.00 L1078.30,690.60 L1078.74,690.26 L1079.16,690.07 L1079.61,690.02 L1080.15,690.10 L1080.85,690.30 L1081.76,690.59 L1082.84,690.98 L1084.01,691.51 L1085.18,692.24 L1086.25,693.20 L1087.21,694.37 L1088.13,695.72 L1089.02,697.29 L1089.92,699.14 L1090.85,701.30 L1091.85,703.98 L1092.90,707.14 L1093.95,710.49 L1094.95,713.74 L1095.85,716.60 L1096.62,719.09 L1097.29,721.41 L1097.91,723.51 L1098.52,725.39 L1099.15,727.00 L1099.72,728.19 L1100.19,728.98 L1100.71,729.61 L1101.41,730.30 L1102.45,731.30 L1103.96,732.68 L1105.84,734.28 L1107.90,735.99 L1109.90,737.70 L1111.65,739.30 L1113.04,740.74 L1114.20,742.11 L1115.30,743.46 L1116.50,744.84 L1117.95,746.30 L1119.79,747.96 L1121.90,749.78 L1124.10,751.59 L1126.19,753.22 L1127.95,754.50 L1129.35,755.44 L1130.51,756.14 L1131.51,756.60 L1132.43,756.82 L1133.35,756.80 L1134.26,756.67 L1135.11,756.45 L1135.90,755.91 L1136.65,754.83 L1137.35,753.00 L1137.99,750.28 L1138.56,746.83 L1139.09,742.83 L1139.62,738.49 L1140.15,734.00 L1140.69,729.05 L1141.22,723.50 L1141.75,717.84 L1142.29,712.51 L1142.85,708.00 L1143.44,704.35 L1144.07,701.24 L1144.69,698.61 L1145.30,696.39 L1145.85,694.50 L1146.34,693.05 L1146.77,692.08 L1147.18,691.44 L1147.60,691.00 L1148.05,690.60 L1148.49,690.26 L1148.91,690.07 L1149.36,690.02 L1149.90,690.10 L1150.60,690.30 L1151.51,690.59 L1152.59,690.98 L1153.76,691.51 L1154.93,692.24 L1156.00,693.20 L1156.96,694.37 L1157.88,695.72 L1158.77,697.29 L1159.67,699.14 L1160.60,701.30 L1161.60,703.98 L1162.65,707.14 L1163.70,710.49 L1164.70,713.74 L1165.60,716.60 L1166.37,719.09 L1167.04,721.41 L1167.66,723.51 L1168.27,725.39 L1168.90,727.00 L1169.47,728.19 L1169.94,728.98 L1170.46,729.61 L1171.16,730.30 L1172.20,731.30 L1173.71,732.68 L1175.59,734.28 L1177.65,735.99 L1179.65,737.70 L1181.40,739.30 L1182.79,740.74 L1183.95,742.11 L1185.05,743.46 L1186.25,744.84 L1187.70,746.30 L1189.54,747.96 L1191.65,749.78 L1193.85,751.59 L1195.94,753.22 L1197.70,754.50 L1199.10,755.44 L1200.26,756.14 L1201.26,756.60 L1202.18,756.82 L1203.10,756.80 L1204.01,756.67 L1204.86,756.45 L1205.65,755.91 L1206.40,754.83 L1207.10,753.00 L1207.74,750.28 L1208.31,746.83 L1208.84,742.83 L1209.37,738.49 L1209.90,734.00 L1210.44,729.05 L1210.97,723.50 L1211.50,717.84 L1212.04,712.51 L1212.60,708.00 L1213.19,704.35 L1213.82,701.24 L1214.44,698.61 L1215.05,696.39 L1215.60,694.50 L1216.09,693.05 L1216.52,692.08 L1216.93,691.44 L1217.35,691.00 L1217.80,690.60 L1218.24,690.26 L1218.66,690.07 L1219.11,690.02 L1219.65,690.10 L1220.35,690.30 L1221.26,690.59 L1222.34,690.98 L1223.51,691.51 L1224.68,692.24 L1225.75,693.20 L1226.71,694.37 L1227.63,695.72 L1228.52,697.29 L1229.42,699.14 L1230.35,701.30 L1231.35,703.98 L1232.40,707.14 L1233.45,710.49 L1234.45,713.74 L1235.35,716.60 L1236.12,719.09 L1236.79,721.41 L1237.41,723.51 L1238.02,725.39 L1238.65,727.00 L1239.22,728.19 L1239.69,728.98 L1240.21,729.61 L1240.91,730.30 L1241.95,731.30 L1243.46,732.68 L1245.34,734.28 L1247.40,735.99 L1249.40,737.70 L1251.15,739.30" fill="none" stroke="#42a8e4" stroke-width="2.0" stroke-linejoin="round" stroke-linecap="round"/>
<text x="799.98" y="789.20" font-size="13.20" fill="#f4f4f4" stroke="#f4f4f4" stroke-width="0.3" font-weight="bold" textLength="23.63" lengthAdjust="spacingAndGlyphs">CO2</text>
<rect x="800" y="798" width="4" height="75" fill="#7d7d7d" />
<text x="804.83" y="807.00" font-size="8.50" fill="#b8b8b8" stroke="#b8b8b8" stroke-width="0.28" textLength="8.51" lengthAdjust="spacingAndGlyphs">50</text>
<text x="804.84" y="870.90" font-size="8.50" fill="#b8b8b8" stroke="#b8b8b8" stroke-width="0.28" textLength="4.25" lengthAdjust="spacingAndGlyphs">0</text>
<path d="M800.50,865.40 L805.00,851.00 L808.00,833.10 L810.90,816.20 L812.60,809.50 L813.40,807.90 L815.90,806.50 L822.90,803.70 L827.90,801.70 L829.90,801.30 L832.10,801.70 L834.20,803.50 L835.90,808.30 L846.70,866.30 L848.20,869.70 L850.40,870.70 L853.40,870.60 L866.20,865.90 L868.60,848.50 L872.10,826.90 L875.60,814.80 L878.00,811.10 L879.60,809.90 L882.10,808.50 L889.10,805.70 L894.10,803.70 L896.10,803.30 L898.30,803.70 L900.40,805.50 L902.10,808.30 L912.90,865.30 L914.40,868.10 L916.60,868.70 L919.60,868.60 L932.40,863.90 L934.80,847.30 L938.30,825.30 L941.80,812.80 L944.20,809.10 L945.80,807.90 L948.30,806.50 L955.30,803.70 L960.30,801.70 L962.30,801.30 L964.50,801.70 L966.60,803.50 L968.30,808.30 L979.10,866.30 L980.60,869.70 L982.80,870.70 L985.80,870.60 L998.60,865.90 L1001.00,848.50 L1004.50,826.90 L1008.00,814.80 L1010.40,811.10 L1012.00,809.90 L1014.50,808.50 L1021.50,805.70 L1026.50,803.70 L1028.50,803.30 L1030.70,803.70 L1032.80,805.50 L1034.50,808.30 L1045.30,865.30 L1046.80,868.10 L1049.00,868.70 L1052.00,868.60 L1064.80,863.90 L1067.20,847.30 L1070.70,825.30 L1074.20,812.80 L1076.60,809.10 L1078.20,807.90 L1080.70,806.50 L1087.70,803.70 L1092.70,801.70 L1094.70,801.30 L1096.90,801.70 L1099.00,803.50 L1100.70,808.30 L1111.50,866.30 L1113.00,869.70 L1115.20,870.70 L1118.20,870.60 L1131.00,865.90 L1133.40,848.50 L1136.90,826.90 L1140.40,814.80 L1142.80,811.10 L1144.40,809.90 L1146.90,808.50 L1153.90,805.70 L1158.90,803.70 L1160.90,803.30 L1163.10,803.70 L1165.20,805.50 L1166.90,808.30 L1177.70,865.30 L1179.20,868.10 L1181.40,868.70 L1184.40,868.60 L1197.20,863.90 L1199.60,847.30 L1203.10,825.30 L1206.60,812.80 L1209.00,809.10 L1210.60,807.90 L1213.10,806.50 L1220.10,803.70 L1225.10,801.70 L1227.10,801.30 L1229.30,801.70 L1231.40,803.50 L1233.10,808.30 L1243.90,866.30 L1245.40,869.70 L1247.60,870.70 L1250.60,870.60" fill="none" stroke="#f4f4f4" stroke-width="2.0" stroke-linejoin="round" stroke-linecap="round"/>
<text x="1265.27" y="564.90" font-size="13.20" fill="#2fd93c" stroke="#2fd93c" stroke-width="0.3" font-weight="bold" textLength="16.92" lengthAdjust="spacingAndGlyphs">HR</text>
<text x="1284.24" y="564.90" font-size="10.50" fill="#c8c8c8" stroke="#c8c8c8" stroke-width="0.28" textLength="19.90" lengthAdjust="spacingAndGlyphs">/min</text>
<text x="1372.78" y="623.40" font-size="30.50" fill="#2fd93c" stroke="#2fd93c" stroke-width="0.35" textLength="33.22" lengthAdjust="spacingAndGlyphs">90</text>
<text x="1421.62" y="564.90" font-size="13.20" fill="#f4f4f4" stroke="#f4f4f4" stroke-width="0.3" font-weight="bold" textLength="13.45" lengthAdjust="spacingAndGlyphs">T1</text>
<text x="1437.63" y="564.90" font-size="10.50" fill="#c8c8c8" stroke="#c8c8c8" stroke-width="0.28" textLength="9.55" lengthAdjust="spacingAndGlyphs">°C</text>
<text x="1505.05" y="609.80" font-size="30.50" fill="#f4f4f4" stroke="#f4f4f4" stroke-width="0.35" textLength="57.25" lengthAdjust="spacingAndGlyphs">37.2</text>
<text x="1421.72" y="648.60" font-size="13.20" fill="#f4f4f4" stroke="#f4f4f4" stroke-width="0.3" font-weight="bold" textLength="13.60" lengthAdjust="spacingAndGlyphs">T2</text>
<text x="1437.63" y="648.60" font-size="10.50" fill="#c8c8c8" stroke="#c8c8c8" stroke-width="0.28" textLength="9.55" lengthAdjust="spacingAndGlyphs">°C</text>
<text x="1505.06" y="693.20" font-size="30.50" fill="#f4f4f4" stroke="#f4f4f4" stroke-width="0.35" textLength="57.20" lengthAdjust="spacingAndGlyphs">37.1</text>
<text x="1421.40" y="732.00" font-size="13.20" fill="#3aa2e6" stroke="#3aa2e6" stroke-width="0.3" font-weight="bold" textLength="22.63" lengthAdjust="spacingAndGlyphs">CVP</text>
<text x="1446.33" y="732.00" font-size="10.50" fill="#c8c8c8" stroke="#c8c8c8" stroke-width="0.28" textLength="28.91" lengthAdjust="spacingAndGlyphs">mmHG</text>
<text x="1529.44" y="776.70" font-size="30.50" fill="#3aa2e6" stroke="#3aa2e6" stroke-width="0.35" textLength="32.66" lengthAdjust="spacingAndGlyphs">12</text>
<text x="1265.61" y="676.90" font-size="13.20" fill="#3aa2e6" stroke="#3aa2e6" stroke-width="0.3" font-weight="bold" textLength="30.50" lengthAdjust="spacingAndGlyphs">SpO2</text>
<text x="1298.60" y="676.90" font-size="10.50" fill="#c8c8c8" stroke="#c8c8c8" stroke-width="0.28" textLength="8.39" lengthAdjust="spacingAndGlyphs">%</text>
<text x="1372.77" y="734.60" font-size="30.50" fill="#3aa2e6" stroke="#3aa2e6" stroke-width="0.35" textLength="33.31" lengthAdjust="spacingAndGlyphs">95</text>
<text x="1265.50" y="787.30" font-size="13.20" fill="#f4f4f4" stroke="#f4f4f4" stroke-width="0.3" font-weight="bold" textLength="22.69" lengthAdjust="spacingAndGlyphs">CO2</text>
<text x="1290.19" y="787.30" font-size="9.60" fill="#c8c8c8" stroke="#c8c8c8" stroke-width="0.28" textLength="28.70" lengthAdjust="spacingAndGlyphs">mmHg</text>
<text x="1346.80" y="821.40" font-size="10.20" fill="#c8c8c8" stroke="#c8c8c8" stroke-width="0.28" textLength="9.63" lengthAdjust="spacingAndGlyphs">Et</text>
<text x="1396.71" y="821.40" font-size="10.20" fill="#c8c8c8" stroke="#c8c8c8" stroke-width="0.28" textLength="9.41" lengthAdjust="spacingAndGlyphs">Fi</text>
<text x="1323.74" y="851.70" font-size="30.50" fill="#f4f4f4" stroke="#f4f4f4" stroke-width="0.35" textLength="33.03" lengthAdjust="spacingAndGlyphs">35</text>
<text x="1389.29" y="851.70" font-size="30.50" fill="#f4f4f4" stroke="#f4f4f4" stroke-width="0.35" textLength="16.81" lengthAdjust="spacingAndGlyphs">0</text>
<text x="1420.94" y="815.70" font-size="13.20" fill="#f0281d" stroke="#f0281d" stroke-width="0.3" font-weight="bold" textLength="28.92" lengthAdjust="spacingAndGlyphs">NIBP</text>
<text x="1451.11" y="815.70" font-size="10.50" fill="#c8c8c8" stroke="#c8c8c8" stroke-width="0.28" textLength="29.96" lengthAdjust="spacingAndGlyphs">mmHG</text>
<text x="1447.62" y="859.80" font-size="30.50" fill="#f0281d" stroke="#f0281d" stroke-width="0.35" textLength="77.62" lengthAdjust="spacingAndGlyphs">90/60</text>
<text x="1530.24" y="855.90" font-size="17.50" fill="#dc281e" stroke="#dc281e" stroke-width="0.1" textLength="31.82" lengthAdjust="spacingAndGlyphs">(70)</text>
<rect x="11.5" y="125" width="775.5" height="21.6" fill="#fcc62b" />
<path d="M23.5,132.0 Q20.3,132.4 19.5,136.0 L17.7,140.2 L29.3,140.2 L27.5,136.0 Q26.7,132.4 23.5,132.0 Z M23.5,131.9 L23.5,129.6" fill="none" stroke="#2d250a" stroke-width="1.2" stroke-linejoin="round"/>
<path d="M22.3,140.8 Q23.5,142.3 24.7,140.8" fill="none" stroke="#2d250a" stroke-width="1.1"/>
<text x="37.25" y="139.90" font-size="11.80" fill="#362c0b" stroke="#362c0b" stroke-width="0.55" textLength="78.42" lengthAdjust="spacingAndGlyphs">Alert message</text>
<text x="645.76" y="140.20" font-size="10.90" fill="#4a3c12" stroke="#4a3c12" stroke-width="0.28" textLength="40.02" lengthAdjust="spacingAndGlyphs">12:32:32</text>
<rect x="695" y="129.8" width="1.4" height="12.8" fill="#3e3418" />
<circle cx="716.7" cy="135.7" r="7.9" fill="#2c2c2e"/>
<text x="713.81" y="139.50" font-size="10.50" fill="#ffffff" stroke="#ffffff" stroke-width="0.3" font-weight="bold" textLength="5.93" lengthAdjust="spacingAndGlyphs">3</text>
<path d="M733.6,133.4 L738.6,138.4 L743.6,133.4" fill="none" stroke="#2b2616" stroke-width="1.4"/>
<circle cx="767.5" cy="136.2" r="13.3" fill="#f5f5f3"/>
<path d="M767.8,132.9 Q765.3,133.4 764.5,136.4 L763.4,139.5 L772.2,139.5 L771.1,136.4 Q770.3,133.4 767.8,132.9 Z M767.8,132.8 L767.8,131.4" fill="none" stroke="#1e1e1e" stroke-width="1.05" stroke-linejoin="round"/>
<path d="M767.0,140.0 Q767.8,141.0 768.6,140.0" fill="none" stroke="#1e1e1e" stroke-width="1"/>
</svg>
</body></html>
